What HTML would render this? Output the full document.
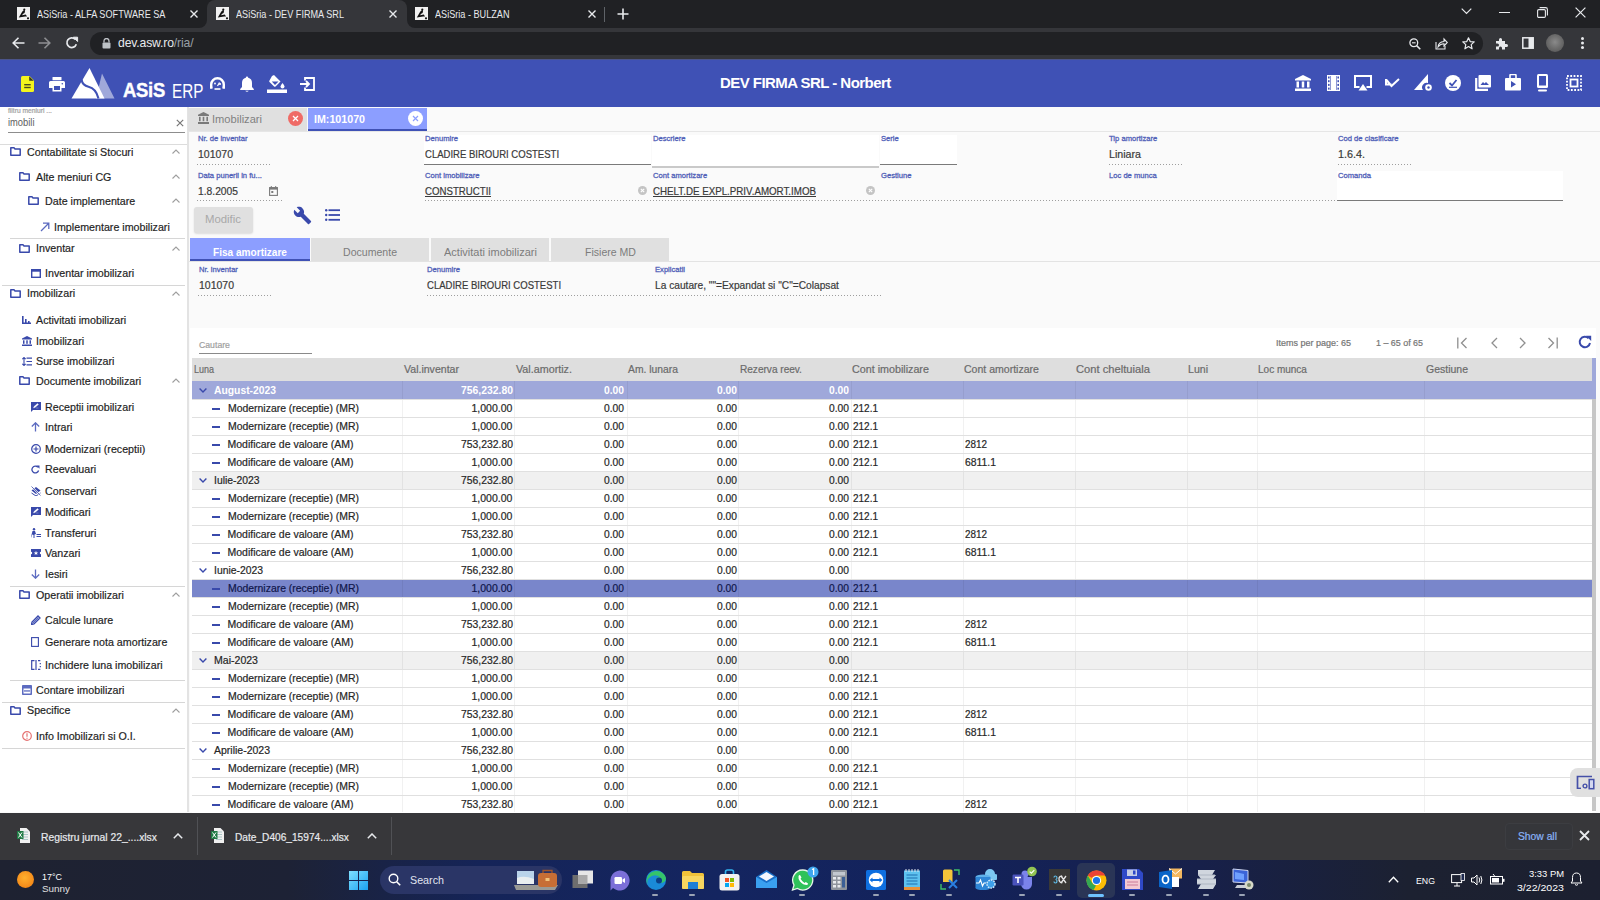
<!DOCTYPE html>
<html><head><meta charset="utf-8">
<style>
*{box-sizing:border-box;margin:0;padding:0}
html,body{width:1600px;height:900px;overflow:hidden;background:#fafafa;font-family:"Liberation Sans",sans-serif}
.a{position:absolute}
svg{display:block}
/* chrome */
#tabs{left:0;top:0;width:1600px;height:28px;background:#202124}
#tool{left:0;top:28px;width:1600px;height:31px;background:#35363a}
.ctab{top:0;height:28px;color:#e8eaed;font-size:11.5px;white-space:nowrap}
.fav{width:13px;height:13px;background:#f1f1f1;top:7px}
.ctxt{top:8px;font-size:10.8px;color:#e8eaed;white-space:nowrap}
.sx{display:inline-block;transform:scaleX(0.845);transform-origin:0 0}
.cx{top:6px;font-size:14px;color:#e8eaed}
#omni{left:90px;top:4px;width:1393px;height:23px;border-radius:12px;background:#202124}
/* header */
#hdr{left:0;top:59px;width:1600px;height:48px;background:#3f51b5}
/* sidebar */
#side{left:0;top:107px;width:187px;height:705px;background:#fff}
#sideb{left:187px;top:107px;width:2px;height:705px;background:#e3e3e3}
.t{display:inline-block;transform-origin:0 0;transform:scaleX(.925)}
.mi{position:absolute;font-size:10.7px;color:#212121;white-space:nowrap}
.sep{position:absolute;height:1px;background:#d6d6d6}
.chev{position:absolute;left:171px;width:9px;height:6px}
/* main */
#main{left:189px;top:107px;width:1411px;height:705px;background:#fafafa}
/* downloads */
#dl{left:0;top:812px;width:1600px;height:48px;background:#38383a}
#task{left:0;top:860px;width:1600px;height:40px;background:linear-gradient(90deg,#1e2231 0%,#1d2235 18%,#152458 30%,#142560 45%,#13225a 60%,#17204a 75%,#1c2131 88%,#1c2030 100%)}

.tx{position:absolute;line-height:1;white-space:nowrap}
.tx span{display:inline-block;transform-origin:0 0}
.w{-webkit-text-stroke:0.2px currentColor}
.dot{position:absolute;height:1px;background-image:linear-gradient(90deg,#9e9e9e 50%,transparent 50%);background-size:3px 1px}
</style></head>
<body>
<!-- CHROME TAB STRIP -->
<div id="tabs" class="a">
  <div class="a" style="left:207px;top:0;width:200px;height:28px;background:#35363a;border-radius:8px 8px 0 0"></div>
  <div class="a" style="left:199px;top:20px;width:8px;height:8px;background:#35363a"></div>
  <div class="a" style="left:199px;top:20px;width:8px;height:8px;background:#202124;border-bottom-right-radius:8px"></div>
  <div class="a" style="left:407px;top:20px;width:8px;height:8px;background:#35363a"></div>
  <div class="a" style="left:407px;top:20px;width:8px;height:8px;background:#202124;border-bottom-left-radius:8px"></div>
  <div class="a fav" style="left:17px"><svg width="13" height="13" viewBox="0 0 13 13"><path d="M1.8 10.5L5 5Q5.8 3.6 6.8 3.2Q7.8 2.8 8 4L7.6 6Q6 6.4 5 8.2L8.8 7.6L10 9.6Q7.5 9 5 10Z" fill="#111"/><circle cx="7.3" cy="2.6" r="1.1" fill="#111"/><circle cx="11" cy="11.3" r="1.1" fill="#111"/></svg></div>
  <div class="a ctxt" style="left:37px"><span class="sx">ASiSria - ALFA SOFTWARE SA</span></div>
  <svg class="a" style="left:190px;top:10px" width="8" height="8" viewBox="0 0 8 8"><path d="M0.5 0.5L7.5 7.5M7.5 0.5L0.5 7.5" stroke="#e8eaed" stroke-width="1.4"/></svg>
  <div class="a fav" style="left:216px"><svg width="13" height="13" viewBox="0 0 13 13"><path d="M1.8 10.5L5 5Q5.8 3.6 6.8 3.2Q7.8 2.8 8 4L7.6 6Q6 6.4 5 8.2L8.8 7.6L10 9.6Q7.5 9 5 10Z" fill="#111"/><circle cx="7.3" cy="2.6" r="1.1" fill="#111"/><circle cx="11" cy="11.3" r="1.1" fill="#111"/></svg></div>
  <div class="a ctxt" style="left:236px"><span class="sx">ASiSria - DEV FIRMA SRL</span></div>
  <svg class="a" style="left:389px;top:10px" width="8" height="8" viewBox="0 0 8 8"><path d="M0.5 0.5L7.5 7.5M7.5 0.5L0.5 7.5" stroke="#e8eaed" stroke-width="1.4"/></svg>
  <div class="a fav" style="left:415px"><svg width="13" height="13" viewBox="0 0 13 13"><path d="M1.8 10.5L5 5Q5.8 3.6 6.8 3.2Q7.8 2.8 8 4L7.6 6Q6 6.4 5 8.2L8.8 7.6L10 9.6Q7.5 9 5 10Z" fill="#111"/><circle cx="7.3" cy="2.6" r="1.1" fill="#111"/><circle cx="11" cy="11.3" r="1.1" fill="#111"/></svg></div>
  <div class="a ctxt" style="left:435px"><span class="sx">ASiSria - BULZAN</span></div>
  <svg class="a" style="left:588px;top:10px" width="8" height="8" viewBox="0 0 8 8"><path d="M0.5 0.5L7.5 7.5M7.5 0.5L0.5 7.5" stroke="#e8eaed" stroke-width="1.4"/></svg>
  <div class="a" style="left:604px;top:7px;width:1px;height:15px;background:#5f6368"></div>
  <svg class="a" style="left:617px;top:8px" width="12" height="12" viewBox="0 0 12 12"><path d="M6 0.5V11.5M0.5 6H11.5" stroke="#e8eaed" stroke-width="1.6"/></svg>
  <svg class="a" style="left:1461px;top:8px" width="11" height="7" viewBox="0 0 11 7"><path d="M0.7 0.7L5.5 5.5L10.3 0.7" stroke="#e8eaed" stroke-width="1.2" fill="none"/></svg>
  <div class="a" style="left:1499px;top:12px;width:11px;height:1px;background:#e8eaed"></div>
  <svg class="a" style="left:1537px;top:7px" width="11" height="11" viewBox="0 0 11 11"><rect x="0.6" y="2.6" width="7.8" height="7.8" rx="1.2" stroke="#e8eaed" stroke-width="1.1" fill="none"/><path d="M2.6 0.6H8.6Q10.4 0.6 10.4 2.4V8.4" stroke="#e8eaed" stroke-width="1.1" fill="none"/></svg>
  <svg class="a" style="left:1575px;top:7px" width="11" height="11" viewBox="0 0 11 11"><path d="M0.6 0.6L10.4 10.4M10.4 0.6L0.6 10.4" stroke="#e8eaed" stroke-width="1.2"/></svg>
</div>
<div id="tool" class="a">
  <svg class="a" style="left:12px;top:9px" width="13" height="12" viewBox="0 0 13 12"><path d="M12.5 6H1.5M6.5 0.8L1.2 6L6.5 11.2" stroke="#e8eaed" stroke-width="1.6" fill="none"/></svg>
  <svg class="a" style="left:38px;top:9px" width="13" height="12" viewBox="0 0 13 12"><path d="M0.5 6H11.5M6.5 0.8L11.8 6L6.5 11.2" stroke="#8e8f92" stroke-width="1.6" fill="none"/></svg>
  <svg class="a" style="left:65px;top:8px" width="14" height="14" viewBox="0 0 14 14"><path d="M11.3 8.2A4.8 4.8 0 1 1 10.2 3.4" stroke="#e8eaed" stroke-width="1.7" fill="none"/><path d="M8.3 1.2H12.6V5.5Z" fill="#e8eaed" stroke="#e8eaed" stroke-width="1"/></svg>
  <div id="omni" class="a">
    <svg class="a" style="left:12px;top:6px" width="9" height="11" viewBox="0 0 9 11"><path d="M2 4.5V3A2.5 2.5 0 0 1 7 3V4.5" stroke="#bdc1c6" stroke-width="1.3" fill="none"/><rect x="0.5" y="4.5" width="8" height="6" rx="1" fill="#bdc1c6"/></svg>
    <div class="a" style="left:28px;top:4px;font-size:12.2px;color:#e8eaed;letter-spacing:-0.15px;white-space:nowrap">dev.asw.ro<span style="color:#9aa0a6">/ria/</span></div>
    <svg class="a" style="left:1319px;top:6px" width="12" height="12" viewBox="0 0 12 12"><circle cx="4.8" cy="4.8" r="3.9" stroke="#e8eaed" stroke-width="1.3" fill="none"/><path d="M7.6 7.6L11.3 11.3" stroke="#e8eaed" stroke-width="1.5"/><path d="M3 4.8H6.6" stroke="#e8eaed" stroke-width="1.1"/></svg>
    <svg class="a" style="left:1345px;top:5px" width="13" height="13" viewBox="0 0 13 13"><path d="M1 5V12H10V9" stroke="#e8eaed" stroke-width="1.1" fill="none"/><path d="M3 10Q3.5 5 9 4.5V2L12.3 5.5L9 9V6.8Q5.5 6.8 3 10Z" stroke="#e8eaed" stroke-width="1.1" fill="none"/></svg>
    <svg class="a" style="left:1372px;top:5px" width="13" height="13" viewBox="0 0 13 13"><path d="M6.5 0.8L8.2 4.6L12.2 4.9L9.2 7.6L10.1 11.8L6.5 9.6L2.9 11.8L3.8 7.6L0.8 4.9L4.8 4.6Z" stroke="#e8eaed" stroke-width="1.2" fill="none" stroke-linejoin="round"/></svg>
  </div>
  <svg class="a" style="left:1495px;top:9px" width="13" height="13" viewBox="0 0 13 13"><path d="M1 4H4V2.5A1.5 1.5 0 0 1 7 2.5V4H10V7H11.5A1.5 1.5 0 0 1 11.5 10H10V12.5H7V11A1.5 1.5 0 0 0 4 11V12.5H1V9.5H2.5A1.5 1.5 0 0 0 2.5 6.5H1Z" fill="#e8eaed"/></svg>
  <svg class="a" style="left:1522px;top:9px" width="12" height="12" viewBox="0 0 12 12"><rect x="0.8" y="0.8" width="10.4" height="10.4" stroke="#e8eaed" stroke-width="1.5" fill="none"/><rect x="6.5" y="0.8" width="4.7" height="10.4" fill="#e8eaed"/></svg>
  <div class="a" style="left:1546px;top:6px;width:18px;height:18px;border-radius:50%;background:radial-gradient(circle at 50% 45%,#8a8a8a 0%,#6e6e6e 45%,#4f4f4f 100%)"></div>
  <div class="a" style="left:1581px;top:9px;width:3px;height:3px;border-radius:50%;background:#e8eaed;box-shadow:0 4.5px 0 #e8eaed,0 9px 0 #e8eaed"></div>
</div>
<div id="hdr" class="a">
  <div class="a hdrline" style="left:0;top:0;width:1600px;height:1px;background:#4b548a"></div>
  <svg class="a" style="left:21px;top:17px" width="13" height="16" viewBox="0 0 13 16"><path d="M1.5 0H8.5L13 4.5V14.5Q13 16 11.5 16H1.5Q0 16 0 14.5V1.5Q0 0 1.5 0Z" fill="#f4f41c"/><path d="M8.2 0.3V4.8H12.7" fill="#3a3a20"/><rect x="3.2" y="8" width="6.5" height="1.4" fill="#4a4a20"/><rect x="3.2" y="10.8" width="6.5" height="1.4" fill="#4a4a20"/></svg>
  <svg class="a" style="left:49px;top:18px" width="16" height="15" viewBox="0 0 16 15"><rect x="3.5" y="0" width="9" height="3.2" rx="0.5" fill="#fff"/><path d="M1.5 4H14.5Q16 4 16 5.5V11H12.5V14.5H3.5V11H0V5.5Q0 4 1.5 4Z" fill="#fff"/><rect x="5" y="9" width="6" height="4" fill="#3f51b5"/><circle cx="13.3" cy="6.8" r="0.8" fill="#3f51b5"/></svg>
  <svg class="a" style="left:71px;top:9px" width="44" height="31" viewBox="0 0 44 31"><path d="M25 30.5L31 5.5L43.5 30.5Z" fill="#9fa8da"/><path d="M0.5 30.5L18.5 0L33.5 30.5Z" fill="#fff"/><path d="M10.5 11.5Q11.5 17.5 17.5 18.8Q25 20.5 27.5 30.5" stroke="#3f51b5" stroke-width="2.1" fill="none"/></svg>
  <div class="a" style="left:122.5px;top:19px;font-size:20.5px;font-weight:bold;color:#fff;white-space:nowrap;letter-spacing:-0.3px;-webkit-text-stroke:0.4px #fff"><span style="display:inline-block;transform:scaleX(0.9);transform-origin:0 0">ASiS</span></div>
  <div class="a" style="left:172px;top:20.5px;font-size:19.5px;color:#fff;white-space:nowrap"><span style="display:inline-block;transform:scaleX(0.78);transform-origin:0 0">ERP</span></div>
  <svg class="a" style="left:209px;top:77px;top:17px" width="17" height="14" viewBox="0 0 17 14"><path d="M2.2 12.5V8.5A6.3 6.3 0 0 1 14.8 8.5V12.5" stroke="#fff" stroke-width="2.4" fill="none"/><path d="M1 11.5H3.4M13.6 11.5H16" stroke="#fff" stroke-width="2.2"/><path d="M5.5 13H11.5" stroke="#fff" stroke-width="1.6"/><circle cx="6" cy="7.5" r="0.9" fill="#fff"/><circle cx="11" cy="8" r="1.1" fill="#fff"/><path d="M8.5 10L10.5 6.5" stroke="#fff" stroke-width="1.2"/></svg>
  <svg class="a" style="left:240px;top:17px" width="14" height="16" viewBox="0 0 14 16"><path d="M7 0.5Q8.2 0.5 8.2 1.7Q12 2.6 12 7V11L13.8 13V14H0.2V13L2 11V7Q2 2.6 5.8 1.7Q5.8 0.5 7 0.5Z" fill="#fff"/><path d="M5.2 14.8Q7 16.6 8.8 14.8Z" fill="#fff"/></svg>
  <svg class="a" style="left:267px;top:16px" width="20" height="18" viewBox="0 0 20 18"><path d="M5 1L7 0L13.5 6.5L8.5 11.5Q7.8 12.2 7.1 11.5L2.5 6.9Q1.8 6.2 2.5 5.5Z" fill="#fff"/><path d="M4.8 6.5H11.5L8 10Z" fill="#3f51b5"/><path d="M15.5 8Q17.5 10.5 17.5 11.5A2 2 0 0 1 13.5 11.5Q13.5 10.5 15.5 8Z" fill="#fff"/><rect x="0" y="14.5" width="20" height="3.5" fill="#fff"/></svg>
  <svg class="a" style="left:300px;top:18px" width="15" height="14" viewBox="0 0 15 14"><path d="M5 3.5V1H14V13H5V10.5" stroke="#fff" stroke-width="1.8" fill="none"/><path d="M0 7H9M6 4L9 7L6 10" stroke="#fff" stroke-width="1.8" fill="none"/></svg>
  <div class="a" style="left:720px;top:15px;font-size:15px;font-weight:bold;color:#fff;white-space:nowrap;letter-spacing:-0.55px">DEV FIRMA SRL - Norbert</div>
  <!-- right icons -->
  <svg class="a" style="left:1295px;top:16px" width="16" height="16" viewBox="0 0 16 16"><path d="M8 0L16 4V5.5H0V4Z" fill="#fff"/><rect x="1.5" y="6.5" width="2.5" height="6" fill="#fff"/><rect x="6.75" y="6.5" width="2.5" height="6" fill="#fff"/><rect x="12" y="6.5" width="2.5" height="6" fill="#fff"/><rect x="0" y="13.5" width="16" height="2.5" fill="#fff"/></svg>
  <svg class="a" style="left:1327px;top:16px" width="13" height="16" viewBox="0 0 13 16"><rect x="0" y="0" width="13" height="16" fill="#fff"/><g fill="#3f51b5"><rect x="1" y="1.5" width="1.6" height="2"/><rect x="1" y="5.2" width="1.6" height="2"/><rect x="1" y="8.9" width="1.6" height="2"/><rect x="1" y="12.6" width="1.6" height="2"/><rect x="10.4" y="1.5" width="1.6" height="2"/><rect x="10.4" y="5.2" width="1.6" height="2"/><rect x="10.4" y="8.9" width="1.6" height="2"/><rect x="10.4" y="12.6" width="1.6" height="2"/></g><path d="M3.5 1V15M9.5 1V15" stroke="#3f51b5" stroke-width="0.6"/></svg>
  <svg class="a" style="left:1354px;top:16px" width="18" height="16" viewBox="0 0 18 16"><path d="M5.5 12H1V1H17V12H12.5" stroke="#fff" stroke-width="2" fill="none"/><path d="M9 9L13.5 15.5H4.5Z" fill="#fff"/></svg>
  <svg class="a" style="left:1385px;top:19px" width="15" height="10" viewBox="0 0 15 10"><path d="M1 1V6.5H6.5M1.5 2L6.5 8L14 1" stroke="#fff" stroke-width="2" fill="none"/></svg>
  <svg class="a" style="left:1414px;top:14px" width="19" height="19" viewBox="0 0 19 19"><path d="M0 17L14 1V10A4.5 4.5 0 0 0 9 17Z" fill="#fff"/><circle cx="14.5" cy="14.5" r="3.3" fill="#fff"/><circle cx="14.5" cy="14.5" r="1.2" fill="#3f51b5"/></svg>
  <svg class="a" style="left:1445px;top:16px" width="16" height="16" viewBox="0 0 16 16"><circle cx="8" cy="8" r="8" fill="#fff"/><path d="M4.5 8L7 10.5L11.5 5" stroke="#3f51b5" stroke-width="1.8" fill="none"/><path d="M4 12.3H12" stroke="#3f51b5" stroke-width="1.2"/></svg>
  <svg class="a" style="left:1475px;top:16px" width="16" height="16" viewBox="0 0 16 16"><rect x="3.5" y="0" width="12.5" height="12.5" rx="1" fill="#fff"/><path d="M1.2 3V14.8H13" stroke="#fff" stroke-width="2.2" fill="none"/><path d="M5.5 10L8 7L9.5 8.5L11 7L14 10Z" fill="#3f51b5"/></svg>
  <svg class="a" style="left:1505px;top:15px" width="16" height="17" viewBox="0 0 16 17"><path d="M5 4V1.5Q5 0.5 6 0.5H10Q11 0.5 11 1.5V4" stroke="#fff" stroke-width="1.6" fill="none"/><rect x="0" y="4" width="16" height="12.5" rx="1" fill="#fff"/><path d="M6 7V13.5L11 10.2Z" fill="#3f51b5"/></svg>
  <svg class="a" style="left:1537px;top:15px" width="11" height="18" viewBox="0 0 11 18"><rect x="0" y="0" width="11" height="14" rx="1.5" fill="#fff"/><rect x="2" y="2" width="7" height="9.5" fill="#3f51b5"/><rect x="1" y="15.5" width="9" height="2" rx="1" fill="#fff"/></svg>
  <svg class="a" style="left:1566px;top:16px" width="16" height="16" viewBox="0 0 16 16"><path d="M1 1H15V15H1Z" stroke="#fff" stroke-width="1.8" fill="none" stroke-dasharray="1.8 1.5"/><rect x="4.5" y="4.5" width="7" height="7" stroke="#fff" stroke-width="1.8" fill="none"/></svg>
</div>
<div class="a" style="left:0px;top:107px;width:187px;height:705px;background:#fff;"></div>
<div class="a" style="left:187px;top:107px;width:2px;height:705px;background:#e3e3e3;"></div>
<div class="tx  w" style="left:8.00px;top:106.91px;font-size:7.2px;color:#9e9e9e;"><span style="transform:scaleX(0.932);">filtru meniuri ...</span></div>
<div class="tx nw" style="left:8.00px;top:117.41px;font-size:10.5px;color:#5e5e5e;"><span style="transform:scaleX(0.891);">imobili</span></div>
<svg class="a" style="left:176px;top:119px" width="8" height="8" viewBox="0 0 8 8"><path d="M0.8 0.8L7.2 7.2M7.2 0.8L0.8 7.2" stroke="#757575" stroke-width="1.15"/></svg>
<div class="a" style="left:8px;top:132px;width:177px;height:1px;background:#8d8d8d;"></div>
<div class="a" style="left:0px;top:144px;width:187px;height:1px;background:#dcdcdc;"></div>
<div class="tx  w" style="left:27.00px;top:146.92px;font-size:11.2px;color:#1f1f1f;"><span style="transform:scaleX(0.955);">Contabilitate si Stocuri</span></div>
<div class="a" style="left:10.00px;top:147.40px"><svg width="11" height="9" viewBox="0 0 11 9"><path d="M0.8 0.8H4L5 1.9H10.2V8.2H0.8Z" stroke="#3949ab" stroke-width="1.5" fill="none" stroke-linejoin="round"/></svg></div>
<svg class="a" style="left:172px;top:149.4px" width="8" height="5" viewBox="0 0 8 5"><path d="M0.5 4.5L4 1L7.5 4.5" stroke="#9e9e9e" stroke-width="1.1" fill="none"/></svg>
<div class="tx  w" style="left:36.00px;top:171.82px;font-size:11.2px;color:#1f1f1f;"><span style="transform:scaleX(0.955);">Alte meniuri CG</span></div>
<div class="a" style="left:19.00px;top:172.30px"><svg width="11" height="9" viewBox="0 0 11 9"><path d="M0.8 0.8H4L5 1.9H10.2V8.2H0.8Z" stroke="#3949ab" stroke-width="1.5" fill="none" stroke-linejoin="round"/></svg></div>
<svg class="a" style="left:172px;top:174.3px" width="8" height="5" viewBox="0 0 8 5"><path d="M0.5 4.5L4 1L7.5 4.5" stroke="#9e9e9e" stroke-width="1.1" fill="none"/></svg>
<div class="tx  w" style="left:45.00px;top:195.72px;font-size:11.2px;color:#1f1f1f;"><span style="transform:scaleX(0.955);">Date implementare</span></div>
<div class="a" style="left:28.00px;top:196.20px"><svg width="11" height="9" viewBox="0 0 11 9"><path d="M0.8 0.8H4L5 1.9H10.2V8.2H0.8Z" stroke="#3949ab" stroke-width="1.5" fill="none" stroke-linejoin="round"/></svg></div>
<svg class="a" style="left:172px;top:198.2px" width="8" height="5" viewBox="0 0 8 5"><path d="M0.5 4.5L4 1L7.5 4.5" stroke="#9e9e9e" stroke-width="1.1" fill="none"/></svg>
<div class="tx  w" style="left:54.00px;top:221.72px;font-size:11.2px;color:#1f1f1f;"><span style="transform:scaleX(0.955);">Implementare imobilizari</span></div>
<div class="a" style="left:40.00px;top:221.70px"><svg width="10" height="10" viewBox="0 0 10 10"><path d="M1 9L8.5 1.5M3 1.2H8.8V7" stroke="#5c6bc0" stroke-width="1.3" fill="none"/></svg></div>
<div class="tx  w" style="left:36.00px;top:243.12px;font-size:11.2px;color:#1f1f1f;"><span style="transform:scaleX(0.955);">Inventar</span></div>
<div class="a" style="left:19.00px;top:243.60px"><svg width="11" height="9" viewBox="0 0 11 9"><path d="M0.8 0.8H4L5 1.9H10.2V8.2H0.8Z" stroke="#3949ab" stroke-width="1.5" fill="none" stroke-linejoin="round"/></svg></div>
<svg class="a" style="left:172px;top:245.6px" width="8" height="5" viewBox="0 0 8 5"><path d="M0.5 4.5L4 1L7.5 4.5" stroke="#9e9e9e" stroke-width="1.1" fill="none"/></svg>
<div class="tx  w" style="left:45.00px;top:268.02px;font-size:11.2px;color:#1f1f1f;"><span style="transform:scaleX(0.955);">Inventar imobilizari</span></div>
<div class="a" style="left:31.00px;top:268.50px"><svg width="10" height="9" viewBox="0 0 10 9"><rect x="0.7" y="0.7" width="8.6" height="7.6" stroke="#3949ab" stroke-width="1.4" fill="none"/><rect x="0.7" y="0.7" width="8.6" height="2" fill="#3949ab"/></svg></div>
<div class="tx  w" style="left:27.00px;top:288.02px;font-size:11.2px;color:#1f1f1f;"><span style="transform:scaleX(0.955);">Imobilizari</span></div>
<div class="a" style="left:10.00px;top:288.50px"><svg width="11" height="9" viewBox="0 0 11 9"><path d="M0.8 0.8H4L5 1.9H10.2V8.2H0.8Z" stroke="#3949ab" stroke-width="1.5" fill="none" stroke-linejoin="round"/></svg></div>
<svg class="a" style="left:172px;top:290.5px" width="8" height="5" viewBox="0 0 8 5"><path d="M0.5 4.5L4 1L7.5 4.5" stroke="#9e9e9e" stroke-width="1.1" fill="none"/></svg>
<div class="tx  w" style="left:36.00px;top:314.62px;font-size:11.2px;color:#1f1f1f;"><span style="transform:scaleX(0.955);">Activitati imobilizari</span></div>
<div class="a" style="left:22.00px;top:315.10px"><svg width="9" height="9" viewBox="0 0 9 9"><rect x="0" y="1" width="1.6" height="8" fill="#3949ab"/><rect x="3" y="4" width="1.6" height="5" fill="#3949ab"/><rect x="6" y="6" width="1.6" height="3" fill="#3949ab"/><rect x="0" y="7.5" width="9" height="1.5" fill="#3949ab"/></svg></div>
<div class="tx  w" style="left:36.00px;top:335.82px;font-size:11.2px;color:#1f1f1f;"><span style="transform:scaleX(0.955);">Imobilizari</span></div>
<div class="a" style="left:22.00px;top:335.80px"><svg width="10" height="10" viewBox="0 0 10 10"><path d="M5 0L10 2.5V3.5H0V2.5Z" fill="#3949ab"/><rect x="1" y="4.3" width="1.5" height="3.5" fill="#3949ab"/><rect x="4.25" y="4.3" width="1.5" height="3.5" fill="#3949ab"/><rect x="7.5" y="4.3" width="1.5" height="3.5" fill="#3949ab"/><rect x="0" y="8.5" width="10" height="1.5" fill="#3949ab"/></svg></div>
<div class="tx  w" style="left:36.00px;top:356.42px;font-size:11.2px;color:#1f1f1f;"><span style="transform:scaleX(0.955);">Surse imobilizari</span></div>
<div class="a" style="left:22.00px;top:356.90px"><svg width="10" height="9" viewBox="0 0 10 9"><path d="M2 0.5V8.5M0.3 2.2L2 0.5L3.7 2.2M0.3 6.8L2 8.5L3.7 6.8" stroke="#3949ab" stroke-width="1.1" fill="none"/><path d="M4.5 1.2H10M4.5 4.5H10M4.5 7.8H10" stroke="#3949ab" stroke-width="1.2"/></svg></div>
<div class="tx  w" style="left:36.00px;top:375.82px;font-size:11.2px;color:#1f1f1f;"><span style="transform:scaleX(0.955);">Documente imobilizari</span></div>
<div class="a" style="left:19.00px;top:376.30px"><svg width="11" height="9" viewBox="0 0 11 9"><path d="M0.8 0.8H4L5 1.9H10.2V8.2H0.8Z" stroke="#3949ab" stroke-width="1.5" fill="none" stroke-linejoin="round"/></svg></div>
<svg class="a" style="left:172px;top:378.3px" width="8" height="5" viewBox="0 0 8 5"><path d="M0.5 4.5L4 1L7.5 4.5" stroke="#9e9e9e" stroke-width="1.1" fill="none"/></svg>
<div class="tx  w" style="left:45.00px;top:402.02px;font-size:11.2px;color:#1f1f1f;"><span style="transform:scaleX(0.955);">Receptii imobilizari</span></div>
<div class="a" style="left:31.00px;top:402.00px"><svg width="10" height="10" viewBox="0 0 10 10"><path d="M0 0H10V8H2L0 10Z" fill="#3949ab"/><path d="M2.5 6L3 4.5L6.5 1.5L7.5 2.5L4 5.5Z M5 6H7.5" fill="#fff" stroke="#fff" stroke-width="0.3"/></svg></div>
<div class="tx  w" style="left:45.00px;top:422.42px;font-size:11.2px;color:#1f1f1f;"><span style="transform:scaleX(0.955);">Intrari</span></div>
<div class="a" style="left:31.00px;top:422.40px"><svg width="9" height="10" viewBox="0 0 9 10"><path d="M4.5 9.5V1M0.8 4.5L4.5 0.8L8.2 4.5" stroke="#5c6bc0" stroke-width="1.3" fill="none"/></svg></div>
<div class="tx  w" style="left:45.00px;top:443.52px;font-size:11.2px;color:#1f1f1f;"><span style="transform:scaleX(0.955);">Modernizari (receptii)</span></div>
<div class="a" style="left:31.00px;top:443.50px"><svg width="10" height="10" viewBox="0 0 10 10"><circle cx="5" cy="5" r="4.3" stroke="#3949ab" stroke-width="1.2" fill="none"/><path d="M5 2.5V7.5M2.5 5H7.5" stroke="#3949ab" stroke-width="1.2"/></svg></div>
<div class="tx  w" style="left:45.00px;top:464.22px;font-size:11.2px;color:#1f1f1f;"><span style="transform:scaleX(0.955);">Reevaluari</span></div>
<div class="a" style="left:31.00px;top:464.70px"><svg width="9" height="9" viewBox="0 0 9 9"><path d="M7.6 5.5A3.4 3.4 0 1 1 6.8 2.2" stroke="#3949ab" stroke-width="1.3" fill="none"/><path d="M5.3 0.5H8.5V3.7Z" fill="#3949ab"/></svg></div>
<div class="tx  w" style="left:45.00px;top:485.82px;font-size:11.2px;color:#1f1f1f;"><span style="transform:scaleX(0.955);">Conservari</span></div>
<div class="a" style="left:31.00px;top:485.80px"><svg width="10" height="10" viewBox="0 0 10 10"><path d="M5 1L9.5 4.5L5 8L0.5 4.5Z" fill="#3949ab"/><path d="M0.5 7L5 10L9.5 7" stroke="#3949ab" stroke-width="1" fill="none"/><path d="M0.5 0.5L9.5 9.5" stroke="#fff" stroke-width="1.6"/><path d="M0.5 0.5L9.5 9.5" stroke="#3949ab" stroke-width="0.8"/></svg></div>
<div class="tx  w" style="left:45.00px;top:506.92px;font-size:11.2px;color:#1f1f1f;"><span style="transform:scaleX(0.955);">Modificari</span></div>
<div class="a" style="left:31.00px;top:506.90px"><svg width="10" height="10" viewBox="0 0 10 10"><path d="M0 0H10V8H2L0 10Z" fill="#3949ab"/><path d="M2.5 6L3 4.5L6.5 1.5L7.5 2.5L4 5.5Z M5 6H7.5" fill="#fff" stroke="#fff" stroke-width="0.3"/></svg></div>
<div class="tx  w" style="left:45.00px;top:527.52px;font-size:11.2px;color:#1f1f1f;"><span style="transform:scaleX(0.955);">Transferuri</span></div>
<div class="a" style="left:31.00px;top:527.50px"><svg width="10" height="10" viewBox="0 0 10 10"><circle cx="3" cy="1.2" r="1.2" fill="#3949ab"/><path d="M1.5 3H4L5 6L3.5 6.5V10H2.5V7L1 6.5L0 10H-0.5L1 5Z" fill="#3949ab"/><path d="M5.5 6.5H10M5.5 8.5H10" stroke="#3949ab" stroke-width="1"/></svg></div>
<div class="tx  w" style="left:45.00px;top:548.42px;font-size:11.2px;color:#1f1f1f;"><span style="transform:scaleX(0.955);">Vanzari</span></div>
<div class="a" style="left:31.00px;top:549.40px"><svg width="10" height="8" viewBox="0 0 10 8"><path d="M0 0H10V2.8A1.2 1.2 0 0 0 10 5.2V8H0V5.2A1.2 1.2 0 0 0 0 2.8Z" fill="#3949ab"/><path d="M5 1.8L5.6 3.4L7.2 3.5L6 4.5L6.4 6L5 5.1L3.6 6L4 4.5L2.8 3.5L4.4 3.4Z" fill="#fff"/></svg></div>
<div class="tx  w" style="left:45.00px;top:569.12px;font-size:11.2px;color:#1f1f1f;"><span style="transform:scaleX(0.955);">Iesiri</span></div>
<div class="a" style="left:31.00px;top:569.10px"><svg width="9" height="10" viewBox="0 0 9 10"><path d="M4.5 0.5V9M0.8 5.5L4.5 9.2L8.2 5.5" stroke="#5c6bc0" stroke-width="1.3" fill="none"/></svg></div>
<div class="tx  w" style="left:36.00px;top:589.82px;font-size:11.2px;color:#1f1f1f;"><span style="transform:scaleX(0.955);">Operatii imobilizari</span></div>
<div class="a" style="left:19.00px;top:590.30px"><svg width="11" height="9" viewBox="0 0 11 9"><path d="M0.8 0.8H4L5 1.9H10.2V8.2H0.8Z" stroke="#3949ab" stroke-width="1.5" fill="none" stroke-linejoin="round"/></svg></div>
<svg class="a" style="left:172px;top:592.3px" width="8" height="5" viewBox="0 0 8 5"><path d="M0.5 4.5L4 1L7.5 4.5" stroke="#9e9e9e" stroke-width="1.1" fill="none"/></svg>
<div class="tx  w" style="left:45.00px;top:615.12px;font-size:11.2px;color:#1f1f1f;"><span style="transform:scaleX(0.955);">Calcule lunare</span></div>
<div class="a" style="left:31.00px;top:615.10px"><svg width="10" height="10" viewBox="0 0 10 10"><path d="M0.5 9.5L1 7L7 1L9 3L3 9Z" fill="none" stroke="#3949ab" stroke-width="1.3"/><path d="M1.5 7.5L7 2L8 3L2.5 8.5Z" fill="#5c6bc0"/></svg></div>
<div class="tx  w" style="left:45.00px;top:636.92px;font-size:11.2px;color:#1f1f1f;"><span style="transform:scaleX(0.955);">Generare nota amortizare</span></div>
<div class="a" style="left:31.00px;top:636.90px"><svg width="8" height="10" viewBox="0 0 8 10"><rect x="0.6" y="0.6" width="6.8" height="8.8" stroke="#3949ab" stroke-width="1.1" fill="none"/></svg></div>
<div class="tx  w" style="left:45.00px;top:660.22px;font-size:11.2px;color:#1f1f1f;"><span style="transform:scaleX(0.955);">Inchidere luna imobilizari</span></div>
<div class="a" style="left:31.00px;top:660.20px"><svg width="10" height="10" viewBox="0 0 10 10"><path d="M3.5 0.7H0.7V9.3H3.5" stroke="#3949ab" stroke-width="1.2" fill="none"/><path d="M5 0V10" stroke="#3949ab" stroke-width="1.2"/><path d="M7 0.7H9.3M9.3 3V4.2M9.3 6V7.2M7 9.3H9.3" stroke="#3949ab" stroke-width="1.2"/></svg></div>
<div class="tx  w" style="left:36.00px;top:685.12px;font-size:11.2px;color:#1f1f1f;"><span style="transform:scaleX(0.955);">Contare imobilizari</span></div>
<div class="a" style="left:22.00px;top:685.10px"><svg width="10" height="10" viewBox="0 0 10 10"><rect x="0" y="0" width="10" height="10" rx="0.8" fill="#5c6bc0"/><rect x="1.5" y="3.5" width="7" height="5" fill="#fff"/><rect x="2" y="5.3" width="6" height="1.3" fill="#5c6bc0"/></svg></div>
<div class="tx  w" style="left:27.00px;top:705.12px;font-size:11.2px;color:#1f1f1f;"><span style="transform:scaleX(0.955);">Specifice</span></div>
<div class="a" style="left:10.00px;top:705.60px"><svg width="11" height="9" viewBox="0 0 11 9"><path d="M0.8 0.8H4L5 1.9H10.2V8.2H0.8Z" stroke="#3949ab" stroke-width="1.5" fill="none" stroke-linejoin="round"/></svg></div>
<svg class="a" style="left:172px;top:707.6px" width="8" height="5" viewBox="0 0 8 5"><path d="M0.5 4.5L4 1L7.5 4.5" stroke="#9e9e9e" stroke-width="1.1" fill="none"/></svg>
<div class="tx  w" style="left:36.00px;top:731.32px;font-size:11.2px;color:#1f1f1f;"><span style="transform:scaleX(0.955);">Info Imobilizari si O.I.</span></div>
<div class="a" style="left:22.00px;top:731.30px"><svg width="10" height="10" viewBox="0 0 10 10"><circle cx="5" cy="5" r="4.3" stroke="#e57373" stroke-width="1.2" fill="none"/><path d="M5 2.3V5.8M5 6.8V7.8" stroke="#e57373" stroke-width="1.2"/></svg></div>
<div class="a" style="left:10px;top:238px;width:175px;height:1px;background:#d6d6d6;"></div>
<div class="a" style="left:2px;top:285px;width:183px;height:1px;background:#d6d6d6;"></div>
<div class="a" style="left:10px;top:586px;width:175px;height:1px;background:#d6d6d6;"></div>
<div class="a" style="left:10px;top:680px;width:175px;height:1px;background:#d6d6d6;"></div>
<div class="a" style="left:2px;top:702px;width:183px;height:1px;background:#d6d6d6;"></div>
<div class="a" style="left:2px;top:748px;width:183px;height:1px;background:#d6d6d6;"></div>
<div class="a" style="left:189px;top:107px;width:1411px;height:705px;background:#fafafa;"></div>
<div class="a" style="left:188px;top:108px;width:119px;height:23px;background:#e0e0e0;"></div>
<div class="a" style="left:198.00px;top:112.00px"><svg width="11" height="12" viewBox="0 0 11 12"><path d="M5.5 0L11 2.8V4H0V2.8Z" fill="#7a7a7a"/><rect x="1" y="4.8" width="1.6" height="4.4" fill="#7a7a7a"/><rect x="4.7" y="4.8" width="1.6" height="4.4" fill="#7a7a7a"/><rect x="8.4" y="4.8" width="1.6" height="4.4" fill="#7a7a7a"/><rect x="0" y="10" width="11" height="2" fill="#7a7a7a"/></svg></div>
<div class="tx nw" style="left:212.00px;top:114.36px;font-size:10.8px;color:#808080;"><span style="transform:scaleX(1.029);">Imobilizari</span></div>
<div class="a" style="left:288.00px;top:111.00px"><svg width="15" height="15" viewBox="0 0 15 15"><circle cx="7.5" cy="7.5" r="7.5" fill="#ef6b66"/><path d="M5 5L10 10M10 5L5 10" stroke="#fff" stroke-width="1.3"/></svg></div>
<div class="a" style="left:308px;top:108px;width:119px;height:23px;background:#8c9eff;"></div>
<div class="a" style="left:308px;top:129px;width:119px;height:2px;background:#3f51b5;"></div>
<div class="tx " style="left:314.00px;top:114.36px;font-size:10.8px;color:#ffffff;font-weight:bold;"><span style="transform:scaleX(0.988);">IM:101070</span></div>
<div class="a" style="left:408.00px;top:111.00px"><svg width="15" height="15" viewBox="0 0 15 15"><circle cx="7.5" cy="7.5" r="7.5" fill="#fff"/><path d="M5 5L10 10M10 5L5 10" stroke="#8c9eff" stroke-width="1.2"/></svg></div>
<div class="a" style="left:189px;top:131px;width:1411px;height:1px;background:#e6e6e6;"></div>
<div class="tx  w" style="left:198.00px;top:135.35px;font-size:7.85px;color:#5060b8;-webkit-text-stroke:0.3px #5060b8;"><span style="transform:scaleX(0.970);">Nr. de inventar</span></div>
<div class="tx  w" style="left:198.00px;top:149.11px;font-size:10.5px;color:#3a3a3a;"><span style="">101070</span></div>
<div class="dot" style="left:197px;top:164px;width:75px"></div>
<div class="a" style="left:424px;top:135px;width:227px;height:30px;background:#ffffff;"></div>
<div class="a" style="left:424px;top:164px;width:227px;height:1px;background:#7a7a7a;"></div>
<div class="tx  w" style="left:425.00px;top:135.35px;font-size:7.85px;color:#5060b8;-webkit-text-stroke:0.3px #5060b8;"><span style="transform:scaleX(0.970);">Denumire</span></div>
<div class="tx  w" style="left:425.00px;top:149.11px;font-size:10.5px;color:#3a3a3a;"><span style="transform:scaleX(0.908);">CLADIRE BIROURI COSTESTI</span></div>
<div class="a" style="left:652px;top:135px;width:227px;height:31px;background:#ffffff;"></div>
<div class="a" style="left:652px;top:166px;width:227px;height:2px;background:#c9c9c9;"></div>
<div class="tx  w" style="left:653.00px;top:135.35px;font-size:7.85px;color:#5060b8;-webkit-text-stroke:0.3px #5060b8;"><span style="transform:scaleX(0.970);">Descriere</span></div>
<div class="a" style="left:880px;top:135px;width:77px;height:30px;background:#ffffff;"></div>
<div class="a" style="left:880px;top:164px;width:77px;height:1px;background:#7a7a7a;"></div>
<div class="tx  w" style="left:881.00px;top:135.35px;font-size:7.85px;color:#5060b8;-webkit-text-stroke:0.3px #5060b8;"><span style="transform:scaleX(0.970);">Serie</span></div>
<div class="tx  w" style="left:1109.00px;top:135.35px;font-size:7.85px;color:#5060b8;-webkit-text-stroke:0.3px #5060b8;"><span style="transform:scaleX(0.970);">Tip amortizare</span></div>
<div class="tx  w" style="left:1109.00px;top:149.11px;font-size:10.5px;color:#3a3a3a;"><span style="transform:scaleX(1.015);">Liniara</span></div>
<div class="dot" style="left:1109px;top:164px;width:75px"></div>
<div class="tx  w" style="left:1338.00px;top:135.35px;font-size:7.85px;color:#5060b8;-webkit-text-stroke:0.3px #5060b8;"><span style="transform:scaleX(0.970);">Cod de clasificare</span></div>
<div class="tx  w" style="left:1338.00px;top:149.11px;font-size:10.5px;color:#3a3a3a;"><span style="transform:scaleX(1.028);">1.6.4.</span></div>
<div class="dot" style="left:1338px;top:164px;width:75px"></div>
<div class="tx  w" style="left:198.00px;top:171.85px;font-size:7.85px;color:#5060b8;-webkit-text-stroke:0.3px #5060b8;"><span style="transform:scaleX(0.970);">Data punerii in fu...</span></div>
<div class="tx  w" style="left:198.00px;top:185.61px;font-size:10.5px;color:#3a3a3a;"><span style="transform:scaleX(0.979);">1.8.2005</span></div>
<div class="a" style="left:269.00px;top:186.00px"><svg width="9" height="10" viewBox="0 0 9 10"><rect x="0.6" y="1.6" width="7.8" height="7.8" stroke="#7a7a7a" stroke-width="1.1" fill="none"/><rect x="0.6" y="1.6" width="7.8" height="2" fill="#7a7a7a"/><path d="M2.3 0V2M6.7 0V2" stroke="#7a7a7a" stroke-width="1"/><rect x="2.3" y="5" width="2" height="2" fill="#7a7a7a"/></svg></div>
<div class="dot" style="left:197px;top:200px;width:87px"></div>
<div class="tx  w" style="left:425.00px;top:171.85px;font-size:7.85px;color:#5060b8;-webkit-text-stroke:0.3px #5060b8;"><span style="transform:scaleX(0.970);">Cont imobilizare</span></div>
<div class="tx  w" style="left:425.00px;top:185.61px;font-size:10.5px;color:#3a3a3a;"><span style="transform:scaleX(0.920);text-decoration:underline;">CONSTRUCTII</span></div>
<div class="a" style="left:638.00px;top:186.00px"><svg width="9" height="9" viewBox="0 0 9 9"><circle cx="4.5" cy="4.5" r="4.5" fill="#c4c4c4"/><path d="M2.8 2.8L6.2 6.2M6.2 2.8L2.8 6.2" stroke="#fff" stroke-width="1.1"/></svg></div>
<div class="dot" style="left:425px;top:200px;width:911px"></div>
<div class="tx  w" style="left:653.00px;top:171.85px;font-size:7.85px;color:#5060b8;-webkit-text-stroke:0.3px #5060b8;"><span style="transform:scaleX(0.970);">Cont amortizare</span></div>
<div class="tx  w" style="left:653.00px;top:185.61px;font-size:10.5px;color:#3a3a3a;"><span style="transform:scaleX(0.929);text-decoration:underline;">CHELT.DE EXPL.PRIV.AMORT.IMOB</span></div>
<div class="a" style="left:866.00px;top:186.00px"><svg width="9" height="9" viewBox="0 0 9 9"><circle cx="4.5" cy="4.5" r="4.5" fill="#c4c4c4"/><path d="M2.8 2.8L6.2 6.2M6.2 2.8L2.8 6.2" stroke="#fff" stroke-width="1.1"/></svg></div>
<div class="tx  w" style="left:881.00px;top:171.85px;font-size:7.85px;color:#5060b8;-webkit-text-stroke:0.3px #5060b8;"><span style="transform:scaleX(0.970);">Gestiune</span></div>
<div class="tx  w" style="left:1109.00px;top:171.85px;font-size:7.85px;color:#5060b8;-webkit-text-stroke:0.3px #5060b8;"><span style="transform:scaleX(0.970);">Loc de munca</span></div>
<div class="a" style="left:1337px;top:171px;width:226px;height:29px;background:#ffffff;"></div>
<div class="a" style="left:1337px;top:200px;width:226px;height:1px;background:#7a7a7a;"></div>
<div class="tx  w" style="left:1338.00px;top:171.85px;font-size:7.85px;color:#5060b8;-webkit-text-stroke:0.3px #5060b8;"><span style="transform:scaleX(0.970);">Comanda</span></div>
<div class="a" style="left:194px;top:207px;width:59px;height:26px;background:#e0e0e0;border-radius:3px;box-shadow:0 1px 2px rgba(0,0,0,.12)"></div>
<div class="tx nw" style="left:205.00px;top:214.36px;font-size:10.8px;color:#a8a8a8;"><span style="transform:scaleX(1.052);">Modific</span></div>
<div class="a" style="left:293.00px;top:206.00px"><svg width="19" height="19" viewBox="0 0 24 24"><path d="M22.7 19l-9.1-9.1c.9-2.3.4-5-1.5-6.9-2-2-5-2.4-7.4-1.3L9 6 6 9 1.6 4.7C.4 7.1.9 10.1 2.9 12.1c1.9 1.9 4.6 2.4 6.9 1.5l9.1 9.1c.4.4 1 .4 1.4 0l2.3-2.3c.5-.4.5-1.1.1-1.4z" fill="#3949ab"/></svg></div>
<div class="a" style="left:325.00px;top:209.00px"><svg width="15" height="12" viewBox="0 0 15 12"><circle cx="1.2" cy="1.2" r="1.2" fill="#3949ab"/><circle cx="1.2" cy="6" r="1.2" fill="#3949ab"/><circle cx="1.2" cy="10.8" r="1.2" fill="#3949ab"/><rect x="3.5" y="0.3" width="11.5" height="1.8" fill="#3949ab"/><rect x="3.5" y="5.1" width="11.5" height="1.8" fill="#3949ab"/><rect x="3.5" y="9.9" width="11.5" height="1.8" fill="#3949ab"/></svg></div>
<div class="a" style="left:190px;top:238px;width:120px;height:23px;background:#8c9eff;"></div>
<div class="a" style="left:190px;top:259px;width:120px;height:2px;background:#3f51b5;"></div>
<div class="tx " style="left:213.00px;top:246.86px;font-size:10.8px;color:#ffffff;font-weight:bold;"><span style="transform:scaleX(0.934);">Fisa amortizare</span></div>
<div class="a" style="left:311px;top:238px;width:118px;height:23px;background:#e0e0e0;"></div>
<div class="tx nw" style="left:343.00px;top:246.86px;font-size:10.8px;color:#7c7c7c;"><span style="transform:scaleX(0.978);">Documente</span></div>
<div class="a" style="left:431px;top:238px;width:118px;height:23px;background:#e0e0e0;"></div>
<div class="tx nw" style="left:443.50px;top:246.86px;font-size:10.8px;color:#7c7c7c;"><span style="transform:scaleX(1.019);">Activitati imobilizari</span></div>
<div class="a" style="left:551px;top:238px;width:118px;height:23px;background:#e0e0e0;"></div>
<div class="tx nw" style="left:584.50px;top:246.86px;font-size:10.8px;color:#7c7c7c;"><span style="transform:scaleX(0.977);">Fisiere MD</span></div>
<div class="a" style="left:189px;top:261px;width:1411px;height:1px;background:#e3e3e3;"></div>
<div class="tx  w" style="left:199.00px;top:265.85px;font-size:7.85px;color:#5060b8;-webkit-text-stroke:0.3px #5060b8;"><span style="transform:scaleX(0.970);">Nr. inventar</span></div>
<div class="tx  w" style="left:199.00px;top:279.61px;font-size:10.5px;color:#3a3a3a;"><span style="">101070</span></div>
<div class="dot" style="left:198px;top:295px;width:75px"></div>
<div class="tx  w" style="left:427.00px;top:265.85px;font-size:7.85px;color:#5060b8;-webkit-text-stroke:0.3px #5060b8;"><span style="transform:scaleX(0.970);">Denumire</span></div>
<div class="tx  w" style="left:427.00px;top:279.61px;font-size:10.5px;color:#3a3a3a;"><span style="transform:scaleX(0.908);">CLADIRE BIROURI COSTESTI</span></div>
<div class="dot" style="left:427px;top:295px;width:226px"></div>
<div class="tx  w" style="left:655.00px;top:265.85px;font-size:7.85px;color:#5060b8;-webkit-text-stroke:0.3px #5060b8;"><span style="transform:scaleX(0.970);">Explicatii</span></div>
<div class="tx  w" style="left:655.00px;top:279.61px;font-size:10.5px;color:#3a3a3a;"><span style="transform:scaleX(0.971);">La cautare, &quot;&quot;=Expandat si &quot;C&quot;=Colapsat</span></div>
<div class="dot" style="left:655px;top:295px;width:226px"></div>
<div class="a" style="left:190px;top:328px;width:1406px;height:484px;background:#ffffff;"></div>
<div class="tx  w" style="left:199.00px;top:340.71px;font-size:9.2px;color:#9e9e9e;"><span style="transform:scaleX(0.947);">Cautare</span></div>
<div class="a" style="left:199px;top:353px;width:113px;height:1px;background:#8a8a8a;"></div>
<div class="tx  w" style="left:1276.00px;top:338.72px;font-size:8.6px;color:#757575;"><span style="transform:scaleX(1.046);">Items per page: 65</span></div>
<div class="tx  w" style="left:1376.00px;top:338.72px;font-size:8.6px;color:#757575;"><span style="transform:scaleX(1.035);">1 – 65 of 65</span></div>
<div class="a" style="left:1457.00px;top:337.00px"><svg width="11" height="12" viewBox="0 0 11 12"><path d="M0.8 0.5V11.5" stroke="#8f8f8f" stroke-width="1.3"/><path d="M9.5 1L4.5 6L9.5 11" stroke="#8f8f8f" stroke-width="1.3" fill="none"/></svg></div>
<div class="a" style="left:1490.00px;top:337.00px"><svg width="8" height="12" viewBox="0 0 8 12"><path d="M7 1L2 6L7 11" stroke="#8f8f8f" stroke-width="1.3" fill="none"/></svg></div>
<div class="a" style="left:1519.00px;top:337.00px"><svg width="8" height="12" viewBox="0 0 8 12"><path d="M1 1L6 6L1 11" stroke="#8f8f8f" stroke-width="1.3" fill="none"/></svg></div>
<div class="a" style="left:1547.00px;top:337.00px"><svg width="11" height="12" viewBox="0 0 11 12"><path d="M10.2 0.5V11.5" stroke="#8f8f8f" stroke-width="1.3"/><path d="M1.5 1L6.5 6L1.5 11" stroke="#8f8f8f" stroke-width="1.3" fill="none"/></svg></div>
<div class="a" style="left:1578.00px;top:335.00px"><svg width="14" height="14" viewBox="0 0 14 14"><path d="M12 8A5.2 5.2 0 1 1 10.6 3.3" stroke="#3949ab" stroke-width="2" fill="none"/><path d="M8 0.8H13.2V6Z" fill="#3949ab"/></svg></div>
<div class="a" style="left:192px;top:358px;width:1400px;height:23px;background:#dedede;"></div>
<div class="tx  w" style="left:194.00px;top:364.87px;font-size:10.2px;color:#6b6b6b;"><span style="transform:scaleX(0.881);">Luna</span></div>
<div class="tx  w" style="left:404.00px;top:364.87px;font-size:10.2px;color:#6b6b6b;"><span style="transform:scaleX(1.036);">Val.inventar</span></div>
<div class="tx  w" style="left:516.00px;top:364.87px;font-size:10.2px;color:#6b6b6b;"><span style="transform:scaleX(1.055);">Val.amortiz.</span></div>
<div class="tx  w" style="left:628.00px;top:364.87px;font-size:10.2px;color:#6b6b6b;"><span style="transform:scaleX(1.014);">Am. lunara</span></div>
<div class="tx  w" style="left:740.00px;top:364.87px;font-size:10.2px;color:#6b6b6b;"><span style="transform:scaleX(0.988);">Rezerva reev.</span></div>
<div class="tx  w" style="left:852.00px;top:364.87px;font-size:10.2px;color:#6b6b6b;"><span style="transform:scaleX(1.053);">Cont imobilizare</span></div>
<div class="tx  w" style="left:964.00px;top:364.87px;font-size:10.2px;color:#6b6b6b;"><span style="transform:scaleX(1.034);">Cont amortizare</span></div>
<div class="tx  w" style="left:1076.00px;top:364.87px;font-size:10.2px;color:#6b6b6b;"><span style="transform:scaleX(1.097);">Cont cheltuiala</span></div>
<div class="tx  w" style="left:1188.00px;top:364.87px;font-size:10.2px;color:#6b6b6b;"><span style="transform:scaleX(1.037);">Luni</span></div>
<div class="tx  w" style="left:1258.00px;top:364.87px;font-size:10.2px;color:#6b6b6b;"><span style="transform:scaleX(0.982);">Loc munca</span></div>
<div class="tx  w" style="left:1426.00px;top:364.87px;font-size:10.2px;color:#6b6b6b;"><span style="transform:scaleX(1.029);">Gestiune</span></div>
<div class="a" style="left:1592px;top:358px;width:4px;height:453px;background:#c6c6c6;"></div>
<div class="a" style="left:1592px;top:358px;width:4px;height:41px;background:#9fa8da;"></div>
<div class="a" style="left:192px;top:381px;width:1400px;height:18px;background:#9fa8da;"></div>
<div class="a" style="left:192px;top:399px;width:1400px;height:18px;background:#ffffff;"></div>
<div class="a" style="left:192px;top:417px;width:1400px;height:18px;background:#ffffff;"></div>
<div class="a" style="left:192px;top:435px;width:1400px;height:18px;background:#ffffff;"></div>
<div class="a" style="left:192px;top:453px;width:1400px;height:18px;background:#ffffff;"></div>
<div class="a" style="left:192px;top:471px;width:1400px;height:18px;background:#f0f0f0;"></div>
<div class="a" style="left:192px;top:489px;width:1400px;height:18px;background:#ffffff;"></div>
<div class="a" style="left:192px;top:507px;width:1400px;height:18px;background:#ffffff;"></div>
<div class="a" style="left:192px;top:525px;width:1400px;height:18px;background:#ffffff;"></div>
<div class="a" style="left:192px;top:543px;width:1400px;height:18px;background:#ffffff;"></div>
<div class="a" style="left:192px;top:561px;width:1400px;height:18px;background:#ffffff;"></div>
<div class="a" style="left:192px;top:579px;width:1400px;height:18px;background:#7986cb;"></div>
<div class="a" style="left:192px;top:597px;width:1400px;height:18px;background:#ffffff;"></div>
<div class="a" style="left:192px;top:615px;width:1400px;height:18px;background:#ffffff;"></div>
<div class="a" style="left:192px;top:633px;width:1400px;height:18px;background:#ffffff;"></div>
<div class="a" style="left:192px;top:651px;width:1400px;height:18px;background:#f0f0f0;"></div>
<div class="a" style="left:192px;top:669px;width:1400px;height:18px;background:#ffffff;"></div>
<div class="a" style="left:192px;top:687px;width:1400px;height:18px;background:#ffffff;"></div>
<div class="a" style="left:192px;top:705px;width:1400px;height:18px;background:#ffffff;"></div>
<div class="a" style="left:192px;top:723px;width:1400px;height:18px;background:#ffffff;"></div>
<div class="a" style="left:192px;top:741px;width:1400px;height:18px;background:#ffffff;"></div>
<div class="a" style="left:192px;top:759px;width:1400px;height:18px;background:#ffffff;"></div>
<div class="a" style="left:192px;top:777px;width:1400px;height:18px;background:#ffffff;"></div>
<div class="a" style="left:192px;top:795px;width:1400px;height:18px;background:#ffffff;"></div>
<div class="a" style="left:402px;top:381px;width:1px;height:431px;background:rgba(0,0,0,0.055);"></div>
<div class="a" style="left:514px;top:381px;width:1px;height:431px;background:rgba(0,0,0,0.055);"></div>
<div class="a" style="left:627px;top:381px;width:1px;height:431px;background:rgba(0,0,0,0.055);"></div>
<div class="a" style="left:738px;top:381px;width:1px;height:431px;background:rgba(0,0,0,0.055);"></div>
<div class="a" style="left:851px;top:381px;width:1px;height:431px;background:rgba(0,0,0,0.055);"></div>
<div class="a" style="left:963px;top:381px;width:1px;height:431px;background:rgba(0,0,0,0.055);"></div>
<div class="a" style="left:1075px;top:381px;width:1px;height:431px;background:rgba(0,0,0,0.055);"></div>
<div class="a" style="left:1187px;top:381px;width:1px;height:431px;background:rgba(0,0,0,0.055);"></div>
<div class="a" style="left:1257px;top:381px;width:1px;height:431px;background:rgba(0,0,0,0.055);"></div>
<div class="a" style="left:1424px;top:381px;width:1px;height:431px;background:rgba(0,0,0,0.055);"></div>
<div class="a" style="left:192px;top:399px;width:1400px;height:1px;background:#e0e0e0;"></div>
<div class="a" style="left:192px;top:417px;width:1400px;height:1px;background:#e0e0e0;"></div>
<div class="a" style="left:192px;top:435px;width:1400px;height:1px;background:#e0e0e0;"></div>
<div class="a" style="left:192px;top:453px;width:1400px;height:1px;background:#e0e0e0;"></div>
<div class="a" style="left:192px;top:471px;width:1400px;height:1px;background:#e0e0e0;"></div>
<div class="a" style="left:192px;top:489px;width:1400px;height:1px;background:#e0e0e0;"></div>
<div class="a" style="left:192px;top:507px;width:1400px;height:1px;background:#e0e0e0;"></div>
<div class="a" style="left:192px;top:525px;width:1400px;height:1px;background:#e0e0e0;"></div>
<div class="a" style="left:192px;top:543px;width:1400px;height:1px;background:#e0e0e0;"></div>
<div class="a" style="left:192px;top:561px;width:1400px;height:1px;background:#e0e0e0;"></div>
<div class="a" style="left:192px;top:579px;width:1400px;height:1px;background:#e0e0e0;"></div>
<div class="a" style="left:192px;top:597px;width:1400px;height:1px;background:#e0e0e0;"></div>
<div class="a" style="left:192px;top:615px;width:1400px;height:1px;background:#e0e0e0;"></div>
<div class="a" style="left:192px;top:633px;width:1400px;height:1px;background:#e0e0e0;"></div>
<div class="a" style="left:192px;top:651px;width:1400px;height:1px;background:#e0e0e0;"></div>
<div class="a" style="left:192px;top:669px;width:1400px;height:1px;background:#e0e0e0;"></div>
<div class="a" style="left:192px;top:687px;width:1400px;height:1px;background:#e0e0e0;"></div>
<div class="a" style="left:192px;top:705px;width:1400px;height:1px;background:#e0e0e0;"></div>
<div class="a" style="left:192px;top:723px;width:1400px;height:1px;background:#e0e0e0;"></div>
<div class="a" style="left:192px;top:741px;width:1400px;height:1px;background:#e0e0e0;"></div>
<div class="a" style="left:192px;top:759px;width:1400px;height:1px;background:#e0e0e0;"></div>
<div class="a" style="left:192px;top:777px;width:1400px;height:1px;background:#e0e0e0;"></div>
<div class="a" style="left:192px;top:795px;width:1400px;height:1px;background:#e0e0e0;"></div>
<div class="a" style="left:198.50px;top:388.00px"><svg width="8" height="5" viewBox="0 0 8 5"><path d="M0.6 0.6L4 4L7.4 0.6" stroke="#3949ab" stroke-width="1.4" fill="none"/></svg></div>
<div class="tx " style="left:214.00px;top:385.31px;font-size:10.5px;color:#ffffff;font-weight:bold;"><span style="transform:scaleX(0.984);">August-2023</span></div>
<div class="tx " style="left:460.50px;top:385.31px;font-size:10.5px;color:#ffffff;font-weight:bold;"><span style="transform:scaleX(0.989);">756,232.80</span></div>
<div class="tx " style="left:604.00px;top:385.31px;font-size:10.5px;color:#ffffff;font-weight:bold;"><span style="transform:scaleX(0.979);">0.00</span></div>
<div class="tx " style="left:717.00px;top:385.31px;font-size:10.5px;color:#ffffff;font-weight:bold;"><span style="transform:scaleX(0.979);">0.00</span></div>
<div class="tx " style="left:829.00px;top:385.31px;font-size:10.5px;color:#ffffff;font-weight:bold;"><span style="transform:scaleX(0.979);">0.00</span></div>
<div class="a" style="left:212px;top:408px;width:8px;height:2px;background:#3949ab;"></div>
<div class="tx  w" style="left:227.50px;top:403.31px;font-size:10.5px;color:#262626;"><span style="transform:scaleX(0.993);">Modernizare (receptie) (MR)</span></div>
<div class="tx  w" style="left:471.50px;top:403.31px;font-size:10.5px;color:#262626;"><span style="">1,000.00</span></div>
<div class="tx  w" style="left:604.00px;top:403.31px;font-size:10.5px;color:#262626;"><span style="transform:scaleX(0.979);">0.00</span></div>
<div class="tx  w" style="left:717.00px;top:403.31px;font-size:10.5px;color:#262626;"><span style="transform:scaleX(0.979);">0.00</span></div>
<div class="tx  w" style="left:829.00px;top:403.31px;font-size:10.5px;color:#262626;"><span style="transform:scaleX(0.979);">0.00</span></div>
<div class="tx  w" style="left:852.50px;top:403.31px;font-size:10.5px;color:#262626;"><span style="transform:scaleX(0.951);">212.1</span></div>
<div class="a" style="left:212px;top:426px;width:8px;height:2px;background:#3949ab;"></div>
<div class="tx  w" style="left:227.50px;top:421.31px;font-size:10.5px;color:#262626;"><span style="transform:scaleX(0.993);">Modernizare (receptie) (MR)</span></div>
<div class="tx  w" style="left:471.50px;top:421.31px;font-size:10.5px;color:#262626;"><span style="">1,000.00</span></div>
<div class="tx  w" style="left:604.00px;top:421.31px;font-size:10.5px;color:#262626;"><span style="transform:scaleX(0.979);">0.00</span></div>
<div class="tx  w" style="left:717.00px;top:421.31px;font-size:10.5px;color:#262626;"><span style="transform:scaleX(0.979);">0.00</span></div>
<div class="tx  w" style="left:829.00px;top:421.31px;font-size:10.5px;color:#262626;"><span style="transform:scaleX(0.979);">0.00</span></div>
<div class="tx  w" style="left:852.50px;top:421.31px;font-size:10.5px;color:#262626;"><span style="transform:scaleX(0.951);">212.1</span></div>
<div class="a" style="left:212px;top:444px;width:8px;height:2px;background:#3949ab;"></div>
<div class="tx  w" style="left:227.50px;top:439.31px;font-size:10.5px;color:#262626;"><span style="">Modificare de valoare (AM)</span></div>
<div class="tx  w" style="left:460.50px;top:439.31px;font-size:10.5px;color:#262626;"><span style="transform:scaleX(0.989);">753,232.80</span></div>
<div class="tx  w" style="left:604.00px;top:439.31px;font-size:10.5px;color:#262626;"><span style="transform:scaleX(0.979);">0.00</span></div>
<div class="tx  w" style="left:717.00px;top:439.31px;font-size:10.5px;color:#262626;"><span style="transform:scaleX(0.979);">0.00</span></div>
<div class="tx  w" style="left:829.00px;top:439.31px;font-size:10.5px;color:#262626;"><span style="transform:scaleX(0.979);">0.00</span></div>
<div class="tx  w" style="left:852.50px;top:439.31px;font-size:10.5px;color:#262626;"><span style="transform:scaleX(0.951);">212.1</span></div>
<div class="tx  w" style="left:964.50px;top:439.31px;font-size:10.5px;color:#262626;"><span style="transform:scaleX(0.942);">2812</span></div>
<div class="a" style="left:212px;top:462px;width:8px;height:2px;background:#3949ab;"></div>
<div class="tx  w" style="left:227.50px;top:457.31px;font-size:10.5px;color:#262626;"><span style="">Modificare de valoare (AM)</span></div>
<div class="tx  w" style="left:471.50px;top:457.31px;font-size:10.5px;color:#262626;"><span style="">1,000.00</span></div>
<div class="tx  w" style="left:604.00px;top:457.31px;font-size:10.5px;color:#262626;"><span style="transform:scaleX(0.979);">0.00</span></div>
<div class="tx  w" style="left:717.00px;top:457.31px;font-size:10.5px;color:#262626;"><span style="transform:scaleX(0.979);">0.00</span></div>
<div class="tx  w" style="left:829.00px;top:457.31px;font-size:10.5px;color:#262626;"><span style="transform:scaleX(0.979);">0.00</span></div>
<div class="tx  w" style="left:852.50px;top:457.31px;font-size:10.5px;color:#262626;"><span style="transform:scaleX(0.951);">212.1</span></div>
<div class="tx  w" style="left:964.50px;top:457.31px;font-size:10.5px;color:#262626;"><span style="transform:scaleX(0.989);">6811.1</span></div>
<div class="a" style="left:198.50px;top:478.00px"><svg width="8" height="5" viewBox="0 0 8 5"><path d="M0.6 0.6L4 4L7.4 0.6" stroke="#3949ab" stroke-width="1.4" fill="none"/></svg></div>
<div class="tx  w" style="left:214.00px;top:475.31px;font-size:10.5px;color:#262626;"><span style="transform:scaleX(0.987);">Iulie-2023</span></div>
<div class="tx  w" style="left:460.50px;top:475.31px;font-size:10.5px;color:#262626;"><span style="transform:scaleX(0.989);">756,232.80</span></div>
<div class="tx  w" style="left:604.00px;top:475.31px;font-size:10.5px;color:#262626;"><span style="transform:scaleX(0.979);">0.00</span></div>
<div class="tx  w" style="left:717.00px;top:475.31px;font-size:10.5px;color:#262626;"><span style="transform:scaleX(0.979);">0.00</span></div>
<div class="tx  w" style="left:829.00px;top:475.31px;font-size:10.5px;color:#262626;"><span style="transform:scaleX(0.979);">0.00</span></div>
<div class="a" style="left:212px;top:498px;width:8px;height:2px;background:#3949ab;"></div>
<div class="tx  w" style="left:227.50px;top:493.31px;font-size:10.5px;color:#262626;"><span style="transform:scaleX(0.993);">Modernizare (receptie) (MR)</span></div>
<div class="tx  w" style="left:471.50px;top:493.31px;font-size:10.5px;color:#262626;"><span style="">1,000.00</span></div>
<div class="tx  w" style="left:604.00px;top:493.31px;font-size:10.5px;color:#262626;"><span style="transform:scaleX(0.979);">0.00</span></div>
<div class="tx  w" style="left:717.00px;top:493.31px;font-size:10.5px;color:#262626;"><span style="transform:scaleX(0.979);">0.00</span></div>
<div class="tx  w" style="left:829.00px;top:493.31px;font-size:10.5px;color:#262626;"><span style="transform:scaleX(0.979);">0.00</span></div>
<div class="tx  w" style="left:852.50px;top:493.31px;font-size:10.5px;color:#262626;"><span style="transform:scaleX(0.951);">212.1</span></div>
<div class="a" style="left:212px;top:516px;width:8px;height:2px;background:#3949ab;"></div>
<div class="tx  w" style="left:227.50px;top:511.31px;font-size:10.5px;color:#262626;"><span style="transform:scaleX(0.993);">Modernizare (receptie) (MR)</span></div>
<div class="tx  w" style="left:471.50px;top:511.31px;font-size:10.5px;color:#262626;"><span style="">1,000.00</span></div>
<div class="tx  w" style="left:604.00px;top:511.31px;font-size:10.5px;color:#262626;"><span style="transform:scaleX(0.979);">0.00</span></div>
<div class="tx  w" style="left:717.00px;top:511.31px;font-size:10.5px;color:#262626;"><span style="transform:scaleX(0.979);">0.00</span></div>
<div class="tx  w" style="left:829.00px;top:511.31px;font-size:10.5px;color:#262626;"><span style="transform:scaleX(0.979);">0.00</span></div>
<div class="tx  w" style="left:852.50px;top:511.31px;font-size:10.5px;color:#262626;"><span style="transform:scaleX(0.951);">212.1</span></div>
<div class="a" style="left:212px;top:534px;width:8px;height:2px;background:#3949ab;"></div>
<div class="tx  w" style="left:227.50px;top:529.31px;font-size:10.5px;color:#262626;"><span style="">Modificare de valoare (AM)</span></div>
<div class="tx  w" style="left:460.50px;top:529.31px;font-size:10.5px;color:#262626;"><span style="transform:scaleX(0.989);">753,232.80</span></div>
<div class="tx  w" style="left:604.00px;top:529.31px;font-size:10.5px;color:#262626;"><span style="transform:scaleX(0.979);">0.00</span></div>
<div class="tx  w" style="left:717.00px;top:529.31px;font-size:10.5px;color:#262626;"><span style="transform:scaleX(0.979);">0.00</span></div>
<div class="tx  w" style="left:829.00px;top:529.31px;font-size:10.5px;color:#262626;"><span style="transform:scaleX(0.979);">0.00</span></div>
<div class="tx  w" style="left:852.50px;top:529.31px;font-size:10.5px;color:#262626;"><span style="transform:scaleX(0.951);">212.1</span></div>
<div class="tx  w" style="left:964.50px;top:529.31px;font-size:10.5px;color:#262626;"><span style="transform:scaleX(0.942);">2812</span></div>
<div class="a" style="left:212px;top:552px;width:8px;height:2px;background:#3949ab;"></div>
<div class="tx  w" style="left:227.50px;top:547.31px;font-size:10.5px;color:#262626;"><span style="">Modificare de valoare (AM)</span></div>
<div class="tx  w" style="left:471.50px;top:547.31px;font-size:10.5px;color:#262626;"><span style="">1,000.00</span></div>
<div class="tx  w" style="left:604.00px;top:547.31px;font-size:10.5px;color:#262626;"><span style="transform:scaleX(0.979);">0.00</span></div>
<div class="tx  w" style="left:717.00px;top:547.31px;font-size:10.5px;color:#262626;"><span style="transform:scaleX(0.979);">0.00</span></div>
<div class="tx  w" style="left:829.00px;top:547.31px;font-size:10.5px;color:#262626;"><span style="transform:scaleX(0.979);">0.00</span></div>
<div class="tx  w" style="left:852.50px;top:547.31px;font-size:10.5px;color:#262626;"><span style="transform:scaleX(0.951);">212.1</span></div>
<div class="tx  w" style="left:964.50px;top:547.31px;font-size:10.5px;color:#262626;"><span style="transform:scaleX(0.989);">6811.1</span></div>
<div class="a" style="left:198.50px;top:568.00px"><svg width="8" height="5" viewBox="0 0 8 5"><path d="M0.6 0.6L4 4L7.4 0.6" stroke="#3949ab" stroke-width="1.4" fill="none"/></svg></div>
<div class="tx  w" style="left:214.00px;top:565.31px;font-size:10.5px;color:#262626;"><span style="transform:scaleX(0.987);">Iunie-2023</span></div>
<div class="tx  w" style="left:460.50px;top:565.31px;font-size:10.5px;color:#262626;"><span style="transform:scaleX(0.989);">756,232.80</span></div>
<div class="tx  w" style="left:604.00px;top:565.31px;font-size:10.5px;color:#262626;"><span style="transform:scaleX(0.979);">0.00</span></div>
<div class="tx  w" style="left:717.00px;top:565.31px;font-size:10.5px;color:#262626;"><span style="transform:scaleX(0.979);">0.00</span></div>
<div class="tx  w" style="left:829.00px;top:565.31px;font-size:10.5px;color:#262626;"><span style="transform:scaleX(0.979);">0.00</span></div>
<div class="a" style="left:212px;top:588px;width:8px;height:2px;background:#3949ab;"></div>
<div class="tx  w" style="left:227.50px;top:583.31px;font-size:10.5px;color:#10164a;"><span style="transform:scaleX(0.993);">Modernizare (receptie) (MR)</span></div>
<div class="tx  w" style="left:471.50px;top:583.31px;font-size:10.5px;color:#10164a;"><span style="">1,000.00</span></div>
<div class="tx  w" style="left:604.00px;top:583.31px;font-size:10.5px;color:#10164a;"><span style="transform:scaleX(0.979);">0.00</span></div>
<div class="tx  w" style="left:717.00px;top:583.31px;font-size:10.5px;color:#10164a;"><span style="transform:scaleX(0.979);">0.00</span></div>
<div class="tx  w" style="left:829.00px;top:583.31px;font-size:10.5px;color:#10164a;"><span style="transform:scaleX(0.979);">0.00</span></div>
<div class="tx  w" style="left:852.50px;top:583.31px;font-size:10.5px;color:#10164a;"><span style="transform:scaleX(0.951);">212.1</span></div>
<div class="a" style="left:212px;top:606px;width:8px;height:2px;background:#3949ab;"></div>
<div class="tx  w" style="left:227.50px;top:601.31px;font-size:10.5px;color:#262626;"><span style="transform:scaleX(0.993);">Modernizare (receptie) (MR)</span></div>
<div class="tx  w" style="left:471.50px;top:601.31px;font-size:10.5px;color:#262626;"><span style="">1,000.00</span></div>
<div class="tx  w" style="left:604.00px;top:601.31px;font-size:10.5px;color:#262626;"><span style="transform:scaleX(0.979);">0.00</span></div>
<div class="tx  w" style="left:717.00px;top:601.31px;font-size:10.5px;color:#262626;"><span style="transform:scaleX(0.979);">0.00</span></div>
<div class="tx  w" style="left:829.00px;top:601.31px;font-size:10.5px;color:#262626;"><span style="transform:scaleX(0.979);">0.00</span></div>
<div class="tx  w" style="left:852.50px;top:601.31px;font-size:10.5px;color:#262626;"><span style="transform:scaleX(0.951);">212.1</span></div>
<div class="a" style="left:212px;top:624px;width:8px;height:2px;background:#3949ab;"></div>
<div class="tx  w" style="left:227.50px;top:619.31px;font-size:10.5px;color:#262626;"><span style="">Modificare de valoare (AM)</span></div>
<div class="tx  w" style="left:460.50px;top:619.31px;font-size:10.5px;color:#262626;"><span style="transform:scaleX(0.989);">753,232.80</span></div>
<div class="tx  w" style="left:604.00px;top:619.31px;font-size:10.5px;color:#262626;"><span style="transform:scaleX(0.979);">0.00</span></div>
<div class="tx  w" style="left:717.00px;top:619.31px;font-size:10.5px;color:#262626;"><span style="transform:scaleX(0.979);">0.00</span></div>
<div class="tx  w" style="left:829.00px;top:619.31px;font-size:10.5px;color:#262626;"><span style="transform:scaleX(0.979);">0.00</span></div>
<div class="tx  w" style="left:852.50px;top:619.31px;font-size:10.5px;color:#262626;"><span style="transform:scaleX(0.951);">212.1</span></div>
<div class="tx  w" style="left:964.50px;top:619.31px;font-size:10.5px;color:#262626;"><span style="transform:scaleX(0.942);">2812</span></div>
<div class="a" style="left:212px;top:642px;width:8px;height:2px;background:#3949ab;"></div>
<div class="tx  w" style="left:227.50px;top:637.31px;font-size:10.5px;color:#262626;"><span style="">Modificare de valoare (AM)</span></div>
<div class="tx  w" style="left:471.50px;top:637.31px;font-size:10.5px;color:#262626;"><span style="">1,000.00</span></div>
<div class="tx  w" style="left:604.00px;top:637.31px;font-size:10.5px;color:#262626;"><span style="transform:scaleX(0.979);">0.00</span></div>
<div class="tx  w" style="left:717.00px;top:637.31px;font-size:10.5px;color:#262626;"><span style="transform:scaleX(0.979);">0.00</span></div>
<div class="tx  w" style="left:829.00px;top:637.31px;font-size:10.5px;color:#262626;"><span style="transform:scaleX(0.979);">0.00</span></div>
<div class="tx  w" style="left:852.50px;top:637.31px;font-size:10.5px;color:#262626;"><span style="transform:scaleX(0.951);">212.1</span></div>
<div class="tx  w" style="left:964.50px;top:637.31px;font-size:10.5px;color:#262626;"><span style="transform:scaleX(0.989);">6811.1</span></div>
<div class="a" style="left:198.50px;top:658.00px"><svg width="8" height="5" viewBox="0 0 8 5"><path d="M0.6 0.6L4 4L7.4 0.6" stroke="#3949ab" stroke-width="1.4" fill="none"/></svg></div>
<div class="tx  w" style="left:214.00px;top:655.31px;font-size:10.5px;color:#262626;"><span style="transform:scaleX(1.005);">Mai-2023</span></div>
<div class="tx  w" style="left:460.50px;top:655.31px;font-size:10.5px;color:#262626;"><span style="transform:scaleX(0.989);">756,232.80</span></div>
<div class="tx  w" style="left:604.00px;top:655.31px;font-size:10.5px;color:#262626;"><span style="transform:scaleX(0.979);">0.00</span></div>
<div class="tx  w" style="left:717.00px;top:655.31px;font-size:10.5px;color:#262626;"><span style="transform:scaleX(0.979);">0.00</span></div>
<div class="tx  w" style="left:829.00px;top:655.31px;font-size:10.5px;color:#262626;"><span style="transform:scaleX(0.979);">0.00</span></div>
<div class="a" style="left:212px;top:678px;width:8px;height:2px;background:#3949ab;"></div>
<div class="tx  w" style="left:227.50px;top:673.31px;font-size:10.5px;color:#262626;"><span style="transform:scaleX(0.993);">Modernizare (receptie) (MR)</span></div>
<div class="tx  w" style="left:471.50px;top:673.31px;font-size:10.5px;color:#262626;"><span style="">1,000.00</span></div>
<div class="tx  w" style="left:604.00px;top:673.31px;font-size:10.5px;color:#262626;"><span style="transform:scaleX(0.979);">0.00</span></div>
<div class="tx  w" style="left:717.00px;top:673.31px;font-size:10.5px;color:#262626;"><span style="transform:scaleX(0.979);">0.00</span></div>
<div class="tx  w" style="left:829.00px;top:673.31px;font-size:10.5px;color:#262626;"><span style="transform:scaleX(0.979);">0.00</span></div>
<div class="tx  w" style="left:852.50px;top:673.31px;font-size:10.5px;color:#262626;"><span style="transform:scaleX(0.951);">212.1</span></div>
<div class="a" style="left:212px;top:696px;width:8px;height:2px;background:#3949ab;"></div>
<div class="tx  w" style="left:227.50px;top:691.31px;font-size:10.5px;color:#262626;"><span style="transform:scaleX(0.993);">Modernizare (receptie) (MR)</span></div>
<div class="tx  w" style="left:471.50px;top:691.31px;font-size:10.5px;color:#262626;"><span style="">1,000.00</span></div>
<div class="tx  w" style="left:604.00px;top:691.31px;font-size:10.5px;color:#262626;"><span style="transform:scaleX(0.979);">0.00</span></div>
<div class="tx  w" style="left:717.00px;top:691.31px;font-size:10.5px;color:#262626;"><span style="transform:scaleX(0.979);">0.00</span></div>
<div class="tx  w" style="left:829.00px;top:691.31px;font-size:10.5px;color:#262626;"><span style="transform:scaleX(0.979);">0.00</span></div>
<div class="tx  w" style="left:852.50px;top:691.31px;font-size:10.5px;color:#262626;"><span style="transform:scaleX(0.951);">212.1</span></div>
<div class="a" style="left:212px;top:714px;width:8px;height:2px;background:#3949ab;"></div>
<div class="tx  w" style="left:227.50px;top:709.31px;font-size:10.5px;color:#262626;"><span style="">Modificare de valoare (AM)</span></div>
<div class="tx  w" style="left:460.50px;top:709.31px;font-size:10.5px;color:#262626;"><span style="transform:scaleX(0.989);">753,232.80</span></div>
<div class="tx  w" style="left:604.00px;top:709.31px;font-size:10.5px;color:#262626;"><span style="transform:scaleX(0.979);">0.00</span></div>
<div class="tx  w" style="left:717.00px;top:709.31px;font-size:10.5px;color:#262626;"><span style="transform:scaleX(0.979);">0.00</span></div>
<div class="tx  w" style="left:829.00px;top:709.31px;font-size:10.5px;color:#262626;"><span style="transform:scaleX(0.979);">0.00</span></div>
<div class="tx  w" style="left:852.50px;top:709.31px;font-size:10.5px;color:#262626;"><span style="transform:scaleX(0.951);">212.1</span></div>
<div class="tx  w" style="left:964.50px;top:709.31px;font-size:10.5px;color:#262626;"><span style="transform:scaleX(0.942);">2812</span></div>
<div class="a" style="left:212px;top:732px;width:8px;height:2px;background:#3949ab;"></div>
<div class="tx  w" style="left:227.50px;top:727.31px;font-size:10.5px;color:#262626;"><span style="">Modificare de valoare (AM)</span></div>
<div class="tx  w" style="left:471.50px;top:727.31px;font-size:10.5px;color:#262626;"><span style="">1,000.00</span></div>
<div class="tx  w" style="left:604.00px;top:727.31px;font-size:10.5px;color:#262626;"><span style="transform:scaleX(0.979);">0.00</span></div>
<div class="tx  w" style="left:717.00px;top:727.31px;font-size:10.5px;color:#262626;"><span style="transform:scaleX(0.979);">0.00</span></div>
<div class="tx  w" style="left:829.00px;top:727.31px;font-size:10.5px;color:#262626;"><span style="transform:scaleX(0.979);">0.00</span></div>
<div class="tx  w" style="left:852.50px;top:727.31px;font-size:10.5px;color:#262626;"><span style="transform:scaleX(0.951);">212.1</span></div>
<div class="tx  w" style="left:964.50px;top:727.31px;font-size:10.5px;color:#262626;"><span style="transform:scaleX(0.989);">6811.1</span></div>
<div class="a" style="left:198.50px;top:748.00px"><svg width="8" height="5" viewBox="0 0 8 5"><path d="M0.6 0.6L4 4L7.4 0.6" stroke="#3949ab" stroke-width="1.4" fill="none"/></svg></div>
<div class="tx  w" style="left:214.00px;top:745.31px;font-size:10.5px;color:#262626;"><span style="">Aprilie-2023</span></div>
<div class="tx  w" style="left:460.50px;top:745.31px;font-size:10.5px;color:#262626;"><span style="transform:scaleX(0.989);">756,232.80</span></div>
<div class="tx  w" style="left:604.00px;top:745.31px;font-size:10.5px;color:#262626;"><span style="transform:scaleX(0.979);">0.00</span></div>
<div class="tx  w" style="left:717.00px;top:745.31px;font-size:10.5px;color:#262626;"><span style="transform:scaleX(0.979);">0.00</span></div>
<div class="tx  w" style="left:829.00px;top:745.31px;font-size:10.5px;color:#262626;"><span style="transform:scaleX(0.979);">0.00</span></div>
<div class="a" style="left:212px;top:768px;width:8px;height:2px;background:#3949ab;"></div>
<div class="tx  w" style="left:227.50px;top:763.31px;font-size:10.5px;color:#262626;"><span style="transform:scaleX(0.993);">Modernizare (receptie) (MR)</span></div>
<div class="tx  w" style="left:471.50px;top:763.31px;font-size:10.5px;color:#262626;"><span style="">1,000.00</span></div>
<div class="tx  w" style="left:604.00px;top:763.31px;font-size:10.5px;color:#262626;"><span style="transform:scaleX(0.979);">0.00</span></div>
<div class="tx  w" style="left:717.00px;top:763.31px;font-size:10.5px;color:#262626;"><span style="transform:scaleX(0.979);">0.00</span></div>
<div class="tx  w" style="left:829.00px;top:763.31px;font-size:10.5px;color:#262626;"><span style="transform:scaleX(0.979);">0.00</span></div>
<div class="tx  w" style="left:852.50px;top:763.31px;font-size:10.5px;color:#262626;"><span style="transform:scaleX(0.951);">212.1</span></div>
<div class="a" style="left:212px;top:786px;width:8px;height:2px;background:#3949ab;"></div>
<div class="tx  w" style="left:227.50px;top:781.31px;font-size:10.5px;color:#262626;"><span style="transform:scaleX(0.993);">Modernizare (receptie) (MR)</span></div>
<div class="tx  w" style="left:471.50px;top:781.31px;font-size:10.5px;color:#262626;"><span style="">1,000.00</span></div>
<div class="tx  w" style="left:604.00px;top:781.31px;font-size:10.5px;color:#262626;"><span style="transform:scaleX(0.979);">0.00</span></div>
<div class="tx  w" style="left:717.00px;top:781.31px;font-size:10.5px;color:#262626;"><span style="transform:scaleX(0.979);">0.00</span></div>
<div class="tx  w" style="left:829.00px;top:781.31px;font-size:10.5px;color:#262626;"><span style="transform:scaleX(0.979);">0.00</span></div>
<div class="tx  w" style="left:852.50px;top:781.31px;font-size:10.5px;color:#262626;"><span style="transform:scaleX(0.951);">212.1</span></div>
<div class="a" style="left:212px;top:804px;width:8px;height:2px;background:#3949ab;"></div>
<div class="tx  w" style="left:227.50px;top:799.31px;font-size:10.5px;color:#262626;"><span style="">Modificare de valoare (AM)</span></div>
<div class="tx  w" style="left:460.50px;top:799.31px;font-size:10.5px;color:#262626;"><span style="transform:scaleX(0.989);">753,232.80</span></div>
<div class="tx  w" style="left:604.00px;top:799.31px;font-size:10.5px;color:#262626;"><span style="transform:scaleX(0.979);">0.00</span></div>
<div class="tx  w" style="left:717.00px;top:799.31px;font-size:10.5px;color:#262626;"><span style="transform:scaleX(0.979);">0.00</span></div>
<div class="tx  w" style="left:829.00px;top:799.31px;font-size:10.5px;color:#262626;"><span style="transform:scaleX(0.979);">0.00</span></div>
<div class="tx  w" style="left:852.50px;top:799.31px;font-size:10.5px;color:#262626;"><span style="transform:scaleX(0.951);">212.1</span></div>
<div class="tx  w" style="left:964.50px;top:799.31px;font-size:10.5px;color:#262626;"><span style="transform:scaleX(0.942);">2812</span></div>
<div class="a" style="left:1570px;top:768px;width:30px;height:29px;background:#e0e0e0;border-radius:8px 0 0 8px"></div>
<div class="a" style="left:1576.00px;top:775.00px"><svg width="19" height="15" viewBox="0 0 19 15"><path d="M1.5 14V1.5H16" stroke="#4550a8" stroke-width="1.7" fill="none"/><path d="M1.5 13.3H5" stroke="#4550a8" stroke-width="1.4"/><circle cx="9" cy="11" r="1.9" stroke="#4550a8" stroke-width="1.4" fill="none"/><rect x="13.2" y="4.5" width="4.6" height="9.2" stroke="#4550a8" stroke-width="1.5" fill="#d4d8f0"/></svg></div>
<div class="a" style="left:0px;top:812.6px;width:1600px;height:47.4px;background:#37373a;"></div>
<div class="a" style="left:17.00px;top:828.00px"><svg width="13" height="15" viewBox="0 0 13 15"><path d="M3 0H9.5L13 3.5V15H3Z" fill="#f0f0f0"/><path d="M5 4H11M5 6.5H11M5 9H11M5 11.5H11" stroke="#9bb" stroke-width="0.8"/><rect x="0" y="3" width="6.5" height="8" fill="#1f7a44"/><path d="M1.5 4.5L5 9.5M5 4.5L1.5 9.5" stroke="#fff" stroke-width="1"/></svg></div>
<div class="tx  w" style="left:41.00px;top:831.63px;font-size:11.3px;color:#e8eaed;"><span style="transform:scaleX(0.914);">Registru jurnal 22_....xlsx</span></div>
<div class="a" style="left:173.00px;top:833.00px"><svg width="10" height="6" viewBox="0 0 10 6"><path d="M0.8 5.2L5 1L9.2 5.2" stroke="#e8eaed" stroke-width="1.5" fill="none"/></svg></div>
<div class="a" style="left:197px;top:817px;width:1px;height:38px;background:#505155;"></div>
<div class="a" style="left:211.00px;top:828.00px"><svg width="13" height="15" viewBox="0 0 13 15"><path d="M3 0H9.5L13 3.5V15H3Z" fill="#f0f0f0"/><path d="M5 4H11M5 6.5H11M5 9H11M5 11.5H11" stroke="#9bb" stroke-width="0.8"/><rect x="0" y="3" width="6.5" height="8" fill="#1f7a44"/><path d="M1.5 4.5L5 9.5M5 4.5L1.5 9.5" stroke="#fff" stroke-width="1"/></svg></div>
<div class="tx  w" style="left:235.00px;top:831.63px;font-size:11.3px;color:#e8eaed;"><span style="transform:scaleX(0.898);">Date_D406_15974....xlsx</span></div>
<div class="a" style="left:367.00px;top:833.00px"><svg width="10" height="6" viewBox="0 0 10 6"><path d="M0.8 5.2L5 1L9.2 5.2" stroke="#e8eaed" stroke-width="1.5" fill="none"/></svg></div>
<div class="a" style="left:391px;top:817px;width:1px;height:38px;background:#505155;"></div>
<div class="a" style="left:1505px;top:823px;width:68px;height:27px;background:#35363a;border:1px solid #3c3d41;border-radius:4px"></div>
<div class="tx  w" style="left:1518.00px;top:830.52px;font-size:11.2px;color:#8ab4f8;"><span style="transform:scaleX(0.921);">Show all</span></div>
<div class="a" style="left:1579.00px;top:830.00px"><svg width="11" height="11" viewBox="0 0 11 11"><path d="M1 1L10 10M10 1L1 10" stroke="#e8eaed" stroke-width="1.8"/></svg></div>
<div class="a" style="left:0px;top:859.5px;width:1600px;height:1px;background:#4a4f5c;"></div>
<div class="a" id="task"></div>
<div class="a" style="left:17px;top:871px;width:17px;height:17px;border-radius:50%;background:radial-gradient(circle at 45% 40%,#ffb02e,#f07a10)"></div>
<div class="tx nw" style="left:42.00px;top:871.70px;font-size:9.8px;color:#ffffff;"><span style="transform:scaleX(0.913);">17°C</span></div>
<div class="tx nw" style="left:42.00px;top:883.70px;font-size:9.8px;color:#e0e0e0;"><span style="transform:scaleX(1.008);">Sunny</span></div>
<div class="a" style="left:349px;top:871px;width:19px;height:19px;background:linear-gradient(135deg,#7fe0ff,#1aa1f0)"></div>
<div class="a" style="left:358px;top:871px;width:1px;height:19px;background:#16214f;"></div>
<div class="a" style="left:349px;top:880px;width:19px;height:1px;background:#16214f;"></div>
<div class="a" style="left:380px;top:866px;width:182px;height:28px;border-radius:14px;background:#2a3566"></div>
<div class="a" style="left:388.00px;top:873.00px"><svg width="13" height="13" viewBox="0 0 13 13"><circle cx="5.5" cy="5.5" r="4.3" stroke="#ffffff" stroke-width="1.4" fill="none"/><path d="M8.7 8.7L12.2 12.2" stroke="#fff" stroke-width="1.6"/></svg></div>
<div class="tx nw" style="left:410.00px;top:874.69px;font-size:11px;color:#e0e4f0;"><span style="transform:scaleX(0.975);">Search</span></div>
<div class="a" style="left:514.00px;top:869.00px"><svg width="46" height="22" viewBox="0 0 46 22"><path d="M3 2H20V15H3Z" fill="#b9d3ea"/><path d="M3 9Q10 6 20 10V15H3Z" fill="#e9eef0"/><path d="M0 16H44L41 21H2Z" fill="#9a9a95"/><rect x="24" y="4" width="19" height="14" rx="3" fill="#c76e35"/><path d="M29 4V1.5H38V4" stroke="#a0552a" stroke-width="1.3" fill="none"/><rect x="31.5" y="9" width="4" height="3" fill="#f2c27a"/></svg></div>
<div class="a" style="left:572.00px;top:870.00px"><svg width="22" height="19" viewBox="0 0 22 19"><rect x="0.5" y="5" width="15" height="13" fill="#6e6e6e"/><rect x="6" y="0.5" width="15" height="13" fill="#e6e6e6"/><rect x="6" y="5" width="9.5" height="8.5" fill="#a9a9a9"/></svg></div>
<div class="a" style="left:609.00px;top:870.00px"><svg width="21" height="21" viewBox="0 0 21 21"><path d="M10.5 0.5A10 10 0 1 1 4 18L1.5 20.5V12A10 10 0 0 1 10.5 0.5Z" fill="#7b6fd8"/><rect x="5.5" y="7" width="7.5" height="7" rx="1.2" fill="#fff"/><path d="M13.5 9.5L16 8V13L13.5 11.5Z" fill="#fff"/></svg></div>
<div class="a" style="left:645.00px;top:869.00px"><svg width="22" height="22" viewBox="0 0 22 22"><circle cx="11" cy="11" r="10" fill="#1a8ad8"/><path d="M1.5 13A10 10 0 0 1 21 9Q21 14 15 14Q11 14 11 11Q11 8 15 8Q9 4 4 9Q1 12 3 16Z" fill="#35c46a"/><circle cx="14" cy="11.5" r="3" fill="#0b3f8a"/></svg></div>
<div class="a" style="left:682.00px;top:871.00px"><svg width="22" height="18" viewBox="0 0 22 18"><path d="M0 1.5Q0 0 1.5 0H8L10 2H20.5Q22 2 22 3.5V16.5Q22 18 20.5 18H1.5Q0 18 0 16.5Z" fill="#f0c23a"/><rect x="0" y="5" width="22" height="13" rx="1.5" fill="#f7d660"/><rect x="6" y="11" width="10" height="7" fill="#1e7fd6"/></svg></div>
<div class="a" style="left:719.00px;top:869.00px"><svg width="21" height="22" viewBox="0 0 21 22"><path d="M6.5 5V3Q6.5 1 8.5 1H12.5Q14.5 1 14.5 3V5" stroke="#33b5f0" stroke-width="1.6" fill="none"/><rect x="0.5" y="5" width="20" height="16.5" rx="2.5" fill="#f2f2f2"/><rect x="6" y="9" width="4" height="4" fill="#f35325"/><rect x="11" y="9" width="4" height="4" fill="#81bc06"/><rect x="6" y="14" width="4" height="4" fill="#05a6f0"/><rect x="11" y="14" width="4" height="4" fill="#ffba08"/></svg></div>
<div class="a" style="left:756.00px;top:870.00px"><svg width="21" height="18" viewBox="0 0 21 18"><path d="M0 7L10.5 0L21 7V18H0Z" fill="#1a6fc8"/><path d="M0 7L10.5 13L21 7V18H0Z" fill="#3aa0f0"/><path d="M3 6.5L10.5 2L18 6.5L10.5 11Z" fill="#f5f8fc"/></svg></div>
<div class="a" style="left:791.00px;top:866.00px"><svg width="28" height="26" viewBox="0 0 28 26"><path d="M11.5 4A10 10 0 1 1 6.5 22.5L1.5 24L3 19A10 10 0 0 1 11.5 4Z" fill="#2fc25a" stroke="#e8f5ea" stroke-width="1.3"/><path d="M7.5 10Q8 9 9 9L10.5 11.5L9.5 12.8Q11 15.5 13.5 17L14.8 16L17 17.5Q17 18.5 16 19Q12 19 9 15.5Q7 13 7.5 10Z" fill="#fff"/><circle cx="22" cy="6" r="5.5" fill="#3fa6ef"/><path d="M21 3.5L22.6 2.8V9" stroke="#fff" stroke-width="1.3" fill="none"/></svg></div>
<div class="a" style="left:831.00px;top:870.00px"><svg width="16" height="20" viewBox="0 0 16 20"><rect x="0" y="0" width="16" height="20" rx="1" fill="#8f949c"/><rect x="2" y="2" width="12" height="3.5" fill="#c3c8cf"/><g fill="#e8eaed"><rect x="2" y="7" width="3" height="2.5"/><rect x="6.5" y="7" width="3" height="2.5"/><rect x="2" y="11" width="3" height="2.5"/><rect x="6.5" y="11" width="3" height="2.5"/><rect x="2" y="15" width="3" height="2.5"/><rect x="6.5" y="15" width="3" height="2.5"/></g><rect x="11" y="7" width="3" height="10.5" fill="#3b5f96"/></svg></div>
<div class="a" style="left:866.00px;top:870.00px"><svg width="20" height="20" viewBox="0 0 20 20"><rect x="0" y="0" width="20" height="20" rx="1.5" fill="#0e6fe0"/><circle cx="10" cy="10" r="7.3" fill="#fff"/><path d="M3.5 10L6.5 7.5V9H13.5V7.5L16.5 10L13.5 12.5V11H6.5V12.5Z" fill="#0e6fe0"/></svg></div>
<div class="a" style="left:904.00px;top:869.00px"><svg width="16" height="21" viewBox="0 0 16 21"><rect x="0" y="1.5" width="16" height="19" fill="#5ec2ef"/><rect x="0" y="18" width="16" height="3" fill="#e8913a"/><path d="M2.5 6H13.5M2.5 9H13.5M2.5 12H13.5M2.5 15H13.5" stroke="#1c6fb0" stroke-width="1"/><path d="M2 0V3M5 0V3M8 0V3M11 0V3M14 0V3" stroke="#dfe6ee" stroke-width="1"/></svg></div>
<div class="a" style="left:940.00px;top:869.00px"><svg width="20" height="21" viewBox="0 0 20 21"><path d="M3 2Q3 0.5 4.5 0.5H11Q12.5 0.5 12.5 2V13H3Z" fill="#f2c43a"/><path d="M1 15V20H6M14 1H19V6" stroke="#3fbf6a" stroke-width="1.4" fill="none"/><path d="M9 11L17 19M17 11L9 19" stroke="#2a7fe0" stroke-width="2"/></svg></div>
<div class="a" style="left:975.00px;top:868.00px"><svg width="22" height="22" viewBox="0 0 22 22"><path d="M10 6A5 5 0 0 1 20 6A3 3 0 0 1 20 12H10Z" fill="#7cc8f2"/><ellipse cx="8" cy="9" rx="7.5" ry="2.5" fill="#5fb0ea"/><rect x="0.5" y="9" width="15" height="11" fill="#2f86d6"/><ellipse cx="8" cy="20" rx="7.5" ry="2" fill="#2f86d6"/><path d="M1 15H4L5.5 12L7.5 18L9 15H11" stroke="#fff" stroke-width="1.1" fill="none"/><circle cx="16" cy="16" r="4" fill="#3fa0ea" stroke="#cfe8fb" stroke-width="1.5" stroke-dasharray="1.6 1"/></svg></div>
<div class="a" style="left:1011.00px;top:866.00px"><svg width="26" height="25" viewBox="0 0 26 25"><circle cx="14" cy="8" r="3.5" fill="#7b83eb"/><path d="M10 11H21V18A5.5 5.5 0 0 1 10 18Z" fill="#7b83eb"/><rect x="1.5" y="8.5" width="11" height="11" rx="1.2" fill="#4b53bc"/><path d="M4 11.5H10M7 11.5V17" stroke="#fff" stroke-width="1.6"/><circle cx="21" cy="5.5" r="4.8" fill="#92c353"/><path d="M18.7 5.6L20.4 7.2L23.3 4.2" stroke="#fff" stroke-width="1.1" fill="none"/></svg></div>
<div class="a" style="left:1049.00px;top:869.00px"><svg width="21" height="21" viewBox="0 0 21 21"><rect x="0" y="0" width="21" height="21" fill="#3a3936"/><path d="M5 8.5Q5 7 6.5 7Q8 7 8 9Q8 10.5 6.5 10.5Q8 10.5 8 12Q8 14 6.5 14Q5 14 5 12.5" stroke="#5fbde8" stroke-width="1.2" fill="none"/><path d="M13.5 7.5Q11 6.5 10 9Q9.5 12 11.5 13.5Q12.5 14 13.5 13.5M12 7L17 14M17 7L12 14" stroke="#e4e4e4" stroke-width="1.3" fill="none"/></svg></div>
<div class="a" style="left:1077px;top:863px;width:38px;height:35px;border-radius:5px;background:#2a3556"></div>
<div class="a" style="left:1086.00px;top:870.00px"><svg width="21" height="21" viewBox="0 0 21 21"><circle cx="10.5" cy="10.5" r="10" fill="#fbbc04"/><path d="M10.5 0.5A10 10 0 0 1 19.2 5.5H10.5A5 5 0 0 0 6 8L1.8 5.5A10 10 0 0 1 10.5 0.5Z" fill="#ea4335"/><path d="M1.8 5.5L6.2 13A5 5 0 0 0 10 15.5L7.6 20.1A10 10 0 0 1 1.8 5.5Z" fill="#34a853"/><circle cx="10.5" cy="10.5" r="4.6" fill="#fff"/><circle cx="10.5" cy="10.5" r="3.6" fill="#1a73e8"/></svg></div>
<div class="a" style="left:1088px;top:894px;width:16px;height:2.5px;background:#6fc3ff;border-radius:2px"></div>
<div class="a" style="left:1122.00px;top:869.00px"><svg width="21" height="21" viewBox="0 0 21 21"><path d="M0 0H17L21 4V21H0Z" fill="#2f49c8"/><rect x="5" y="0.5" width="10" height="6.5" fill="#c6cde6"/><rect x="11" y="1.5" width="2.5" height="4" fill="#2f49c8"/><rect x="3" y="10" width="15" height="10" fill="#f3c9d2"/><path d="M5 13H16M5 16H16" stroke="#c0688a" stroke-width="0.8"/></svg></div>
<div class="a" style="left:1159.00px;top:868.00px"><svg width="24" height="22" viewBox="0 0 24 22"><rect x="10" y="0.5" width="13" height="10" fill="#f3b860"/><path d="M10 0.5L16.5 6L23 0.5" stroke="#fff" stroke-width="1" fill="none"/><rect x="10" y="9" width="10" height="10" fill="#ffffff"/><path d="M0 4L13 2V21L0 19Z" fill="#0a64c8"/><ellipse cx="6.5" cy="11.5" rx="3" ry="3.8" stroke="#fff" stroke-width="1.8" fill="none"/></svg></div>
<div class="a" style="left:1196.00px;top:869.00px"><svg width="22" height="21" viewBox="0 0 22 21"><path d="M2 1H19L16 6H20L17 10H20V15L17 20H2L5 15H1V10H5L2 6Z" fill="#d0d6de"/><path d="M2 6H19M1 10H20M1 15H20" stroke="#aeb6c2" stroke-width="1"/></svg></div>
<div class="a" style="left:1232.00px;top:868.00px"><svg width="22" height="23" viewBox="0 0 22 23"><path d="M1 1L16 2.5V15L1 14Z" fill="#3b64d8" stroke="#cfd6ee" stroke-width="1"/><path d="M3 4L12 6V12L3 11Z" fill="#6fa0ff"/><path d="M5 17H14L16 20H3Z" fill="#c9ced6"/><circle cx="17" cy="17" r="4.5" fill="#d7d9c8"/><circle cx="17" cy="17" r="2" fill="#7a8a6a"/></svg></div>
<div class="a" style="left:652px;top:894px;width:6px;height:2px;background:#9aa3b5;border-radius:1px"></div>
<div class="a" style="left:689px;top:894px;width:6px;height:2px;background:#9aa3b5;border-radius:1px"></div>
<div class="a" style="left:799px;top:894px;width:6px;height:2px;background:#9aa3b5;border-radius:1px"></div>
<div class="a" style="left:873px;top:894px;width:6px;height:2px;background:#9aa3b5;border-radius:1px"></div>
<div class="a" style="left:909px;top:894px;width:6px;height:2px;background:#9aa3b5;border-radius:1px"></div>
<div class="a" style="left:946px;top:894px;width:6px;height:2px;background:#9aa3b5;border-radius:1px"></div>
<div class="a" style="left:1019px;top:894px;width:6px;height:2px;background:#9aa3b5;border-radius:1px"></div>
<div class="a" style="left:1056px;top:894px;width:6px;height:2px;background:#9aa3b5;border-radius:1px"></div>
<div class="a" style="left:1129px;top:894px;width:6px;height:2px;background:#9aa3b5;border-radius:1px"></div>
<div class="a" style="left:1166px;top:894px;width:6px;height:2px;background:#9aa3b5;border-radius:1px"></div>
<div class="a" style="left:1203px;top:894px;width:6px;height:2px;background:#9aa3b5;border-radius:1px"></div>
<div class="a" style="left:1239px;top:894px;width:6px;height:2px;background:#9aa3b5;border-radius:1px"></div>
<div class="a" style="left:1388.00px;top:876.00px"><svg width="11" height="7" viewBox="0 0 11 7"><path d="M0.8 6.2L5.5 1.2L10.2 6.2" stroke="#fff" stroke-width="1.3" fill="none"/></svg></div>
<div class="tx nw" style="left:1416.00px;top:875.87px;font-size:9.6px;color:#ffffff;"><span style="transform:scaleX(0.913);">ENG</span></div>
<div class="a" style="left:1451.00px;top:873.00px"><svg width="14" height="14" viewBox="0 0 14 14"><rect x="0.6" y="1.6" width="10" height="8" stroke="#fff" stroke-width="1" fill="none"/><path d="M3 13H9M6 10V13" stroke="#fff" stroke-width="1"/><rect x="10" y="0.5" width="3.5" height="7" fill="#1e2a50" stroke="#fff" stroke-width="0.8"/></svg></div>
<div class="a" style="left:1471.00px;top:874.00px"><svg width="12" height="12" viewBox="0 0 12 12"><path d="M0.5 4H3L6 1V11L3 8H0.5Z" stroke="#fff" stroke-width="1" fill="none"/><path d="M8 3.5Q9.5 6 8 8.5M9.8 2Q12 6 9.8 10" stroke="#fff" stroke-width="1" fill="none"/></svg></div>
<div class="a" style="left:1490.00px;top:874.00px"><svg width="15" height="11" viewBox="0 0 15 11"><rect x="0.5" y="2.5" width="12" height="7.5" stroke="#fff" stroke-width="1" fill="none"/><rect x="2" y="4" width="7" height="4.5" fill="#fff"/><rect x="13" y="4.8" width="1.5" height="3" fill="#fff"/><path d="M3 0L5 2.5" stroke="#fff"/></svg></div>
<div class="tx nw" style="left:1529.00px;top:868.70px;font-size:9.8px;color:#ffffff;"><span style="transform:scaleX(0.959);">3:33 PM</span></div>
<div class="tx nw" style="left:1517.00px;top:882.70px;font-size:9.8px;color:#ffffff;"><span style="transform:scaleX(1.078);">3/22/2023</span></div>
<div class="a" style="left:1570.00px;top:872.00px"><svg width="13" height="14" viewBox="0 0 13 14"><path d="M6.5 1Q10.5 1 10.5 5.5V9L12 11H1L2.5 9V5.5Q2.5 1 6.5 1Z" stroke="#fff" stroke-width="1" fill="none"/><path d="M5 12.5Q6.5 14 8 12.5" stroke="#fff" stroke-width="1" fill="none"/></svg></div>
</body></html>
